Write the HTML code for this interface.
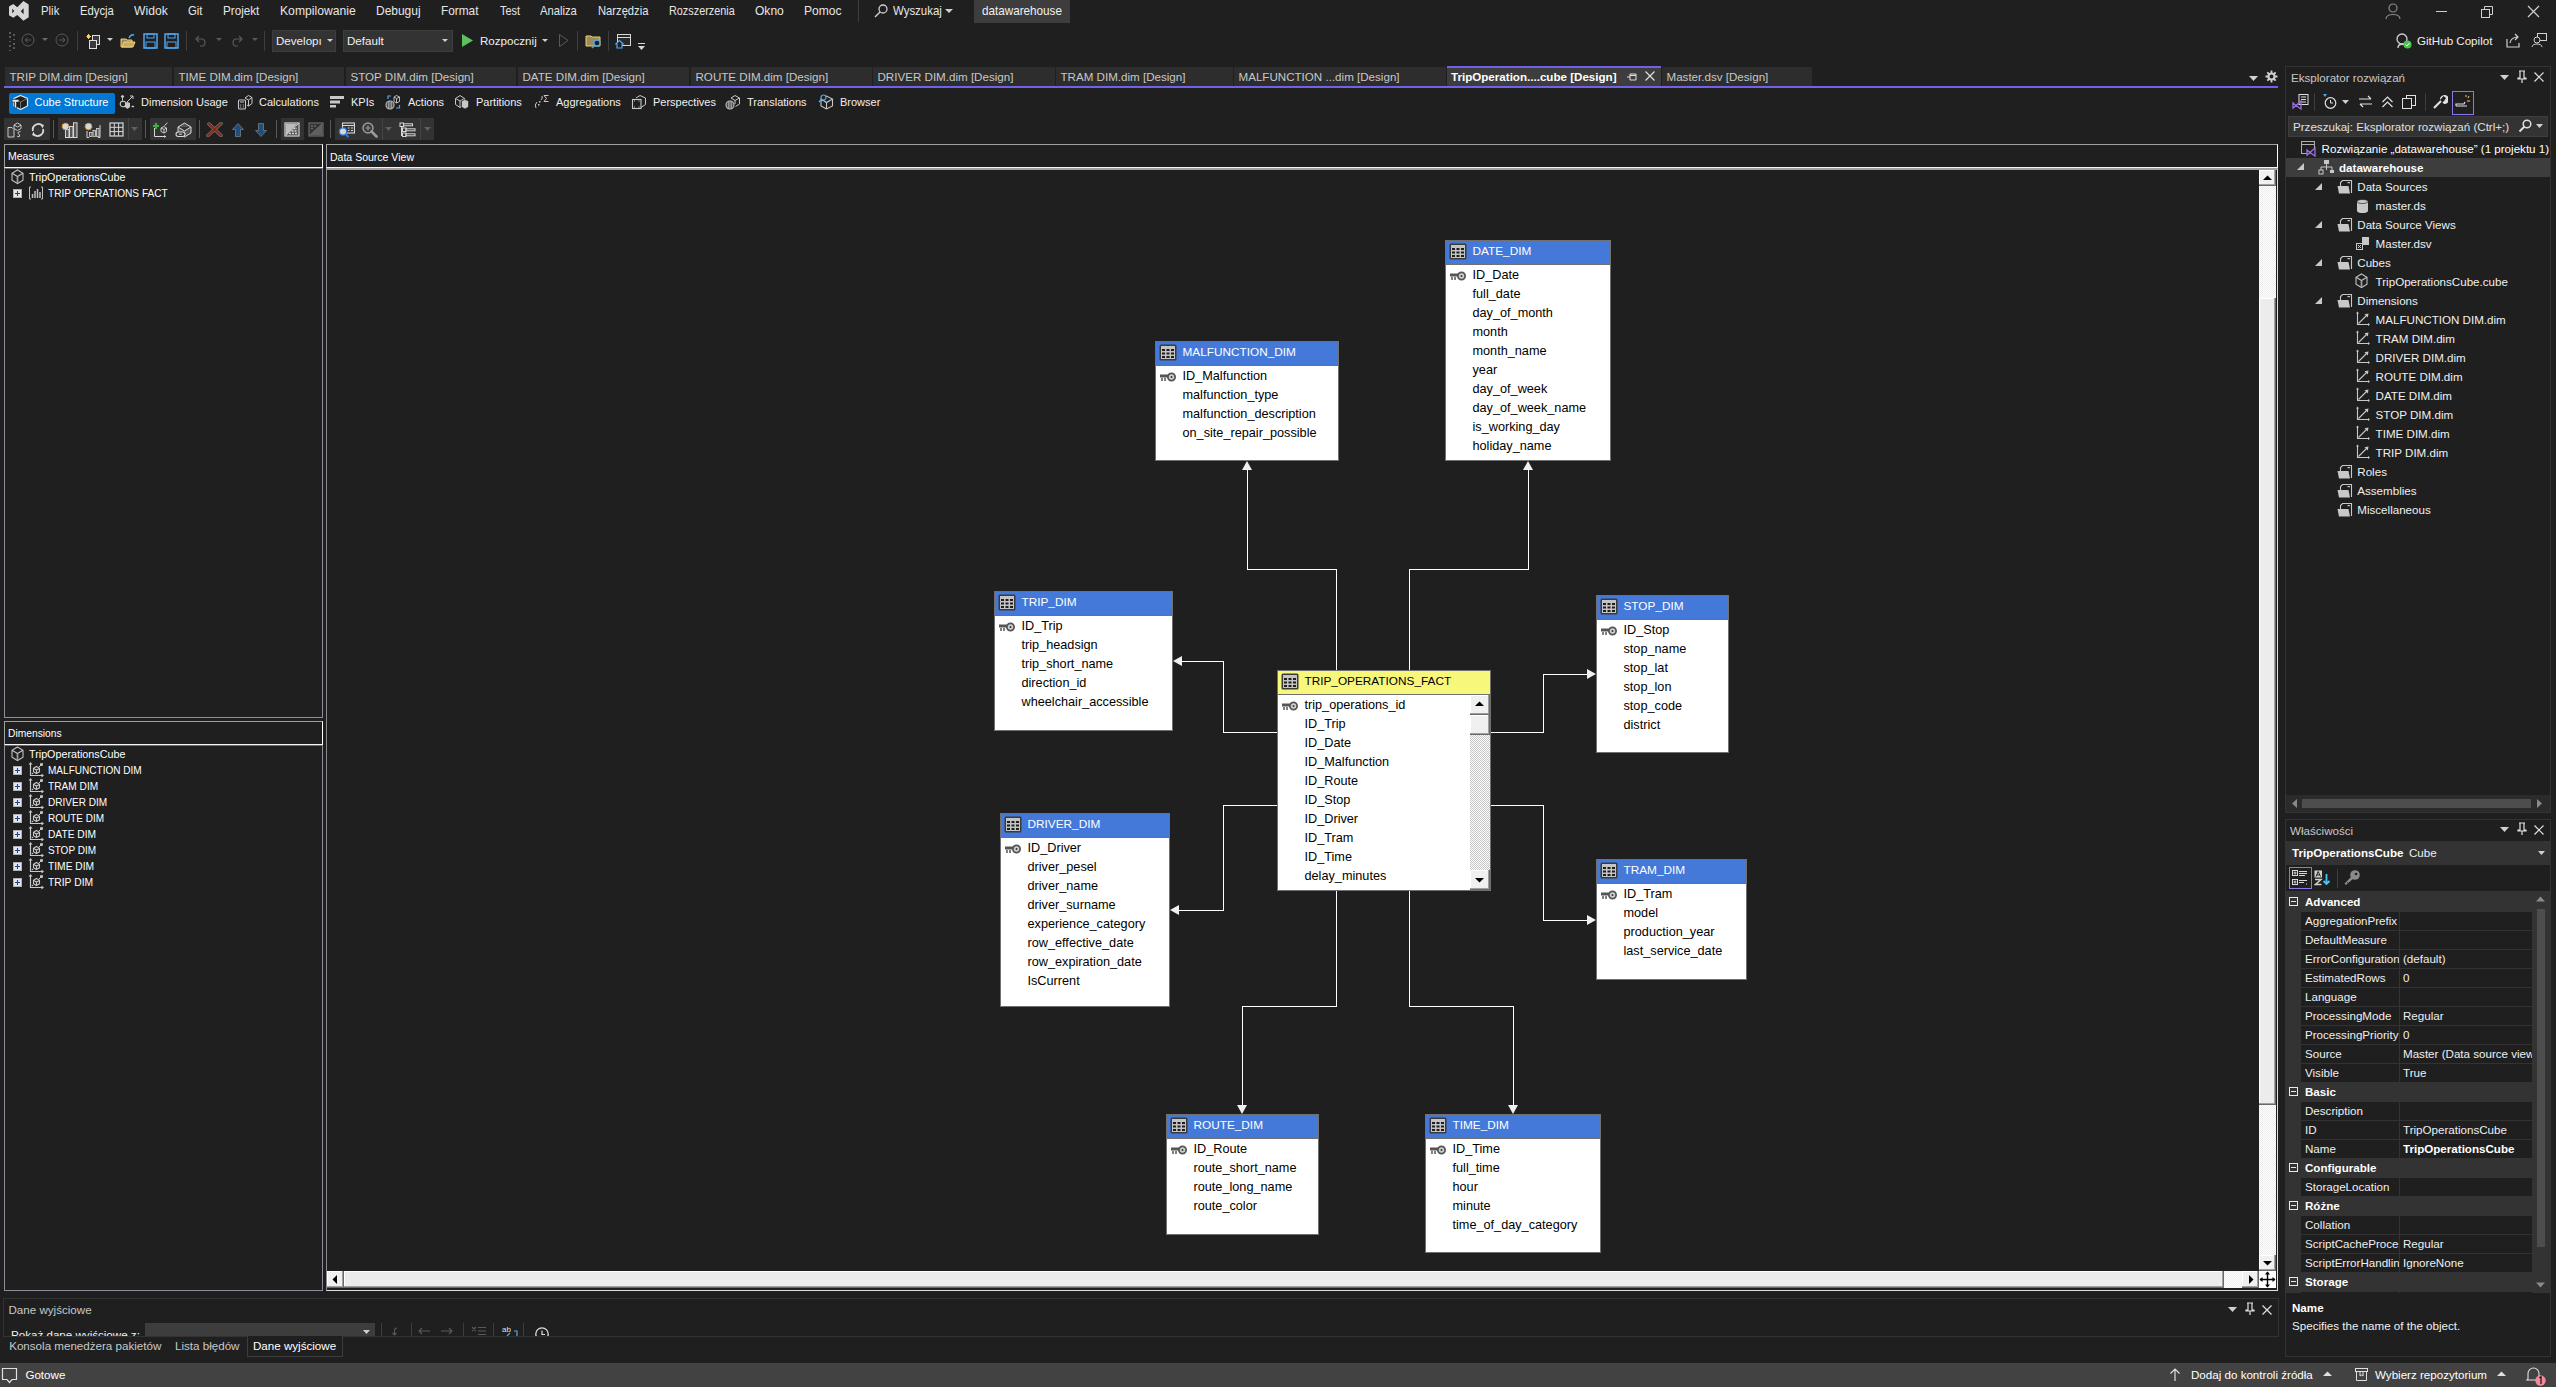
<!DOCTYPE html>
<html><head><meta charset="utf-8"><style>
html,body{margin:0;padding:0;}
body{width:2556px;height:1387px;overflow:hidden;background:#1f1f1f;position:relative;font-family:"Liberation Sans",sans-serif;}
.t{position:absolute;white-space:nowrap;}
.r{position:absolute;}
.clip{overflow:hidden;}
</style></head><body>
<svg class="r" style="left:0px;top:0px;" width="34" height="24" viewBox="0 0 34 24"><path d="M9 6.5 L13.3 4 L17.3 7.3 L23.4 1 L28.7 4.6 V17.2 L23.4 20.8 L17.3 14.9 L13.3 17.8 L9 15.2 Z M12.3 8.8 V13.2 L14.3 11 Z M23.6 8.2 V14.2 L20.8 11.2 Z" fill="#d6d6d6" fill-rule="evenodd"/></svg>
<div class="t" style="left:41.3px;top:1.77px;font-size:12.2px;line-height:18px;color:#e6e6e6;transform:scaleX(0.9325);transform-origin:0 0;">Plik</div>
<div class="t" style="left:80.1px;top:1.77px;font-size:12.2px;line-height:18px;color:#e6e6e6;transform:scaleX(0.9240);transform-origin:0 0;">Edycja</div>
<div class="t" style="left:134px;top:1.77px;font-size:12.2px;line-height:18px;color:#e6e6e6;transform:scaleX(0.9953);transform-origin:0 0;">Widok</div>
<div class="t" style="left:188.3px;top:1.77px;font-size:12.2px;line-height:18px;color:#e6e6e6;transform:scaleX(0.9308);transform-origin:0 0;">Git</div>
<div class="t" style="left:223.3px;top:1.77px;font-size:12.2px;line-height:18px;color:#e6e6e6;transform:scaleX(0.9568);transform-origin:0 0;">Projekt</div>
<div class="t" style="left:280.2px;top:1.77px;font-size:12.2px;line-height:18px;color:#e6e6e6;transform:scaleX(0.9990);transform-origin:0 0;">Kompilowanie</div>
<div class="t" style="left:376px;top:1.77px;font-size:12.2px;line-height:18px;color:#e6e6e6;transform:scaleX(0.9822);transform-origin:0 0;">Debuguj</div>
<div class="t" style="left:441.2px;top:1.77px;font-size:12.2px;line-height:18px;color:#e6e6e6;transform:scaleX(0.9713);transform-origin:0 0;">Format</div>
<div class="t" style="left:499.5px;top:1.77px;font-size:12.2px;line-height:18px;color:#e6e6e6;transform:scaleX(0.8945);transform-origin:0 0;">Test</div>
<div class="t" style="left:540.3px;top:1.77px;font-size:12.2px;line-height:18px;color:#e6e6e6;transform:scaleX(0.9207);transform-origin:0 0;">Analiza</div>
<div class="t" style="left:598.4px;top:1.77px;font-size:12.2px;line-height:18px;color:#e6e6e6;transform:scaleX(0.9185);transform-origin:0 0;">Narzędzia</div>
<div class="t" style="left:669px;top:1.77px;font-size:12.2px;line-height:18px;color:#e6e6e6;transform:scaleX(0.8897);transform-origin:0 0;">Rozszerzenia</div>
<div class="t" style="left:755.2px;top:1.77px;font-size:12.2px;line-height:18px;color:#e6e6e6;transform:scaleX(0.9883);transform-origin:0 0;">Okno</div>
<div class="t" style="left:804px;top:1.77px;font-size:12.2px;line-height:18px;color:#e6e6e6;transform:scaleX(0.9885);transform-origin:0 0;">Pomoc</div>
<div class="r" style="left:858px;top:0px;width:1px;height:22px;background:#3d3d3d;"></div>
<svg class="r" style="left:873px;top:3px;" width="16" height="16" viewBox="0 0 16 16"><circle cx="10" cy="6" r="4" fill="none" stroke="#cfcfcf" stroke-width="1.3"/><path d="M7 9 L2 14" stroke="#cfcfcf" stroke-width="1.5"/></svg>
<div class="t" style="left:892.9px;top:1.77px;font-size:12.2px;line-height:18px;color:#e6e6e6;transform:scaleX(0.9379);transform-origin:0 0;">Wyszukaj</div>
<svg class="r" style="left:945px;top:8px;" width="8" height="6" viewBox="0 0 8 6"><path d="M0 1 L8 1 L4 5 Z" fill="#cfcfcf"/></svg>
<div class="r" style="left:974px;top:0px;width:96px;height:23px;background:#3d3d3d;"></div>
<div class="t" style="left:981.8px;top:1.77px;font-size:12.2px;line-height:18px;color:#f0f0f0;transform:scaleX(0.9595);transform-origin:0 0;">datawarehouse</div>
<svg class="r" style="left:2384px;top:2px;" width="18" height="18" viewBox="0 0 18 18"><circle cx="9" cy="6" r="4" fill="none" stroke="#8a8a8a" stroke-width="1.2"/><path d="M2 17 C2 11 16 11 16 17" fill="none" stroke="#8a8a8a" stroke-width="1.2"/></svg>
<div class="r" style="left:2436px;top:11px;width:11px;height:1px;background:#d0d0d0;"></div>
<svg class="r" style="left:2481px;top:6px;" width="12" height="12" viewBox="0 0 12 12"><rect x="0.5" y="3.5" width="8" height="8" fill="none" stroke="#d0d0d0"/><path d="M3.5 3.5 V0.5 H11.5 V8.5 H8.5" fill="none" stroke="#d0d0d0"/></svg>
<svg class="r" style="left:2527px;top:5px;" width="13" height="13" viewBox="0 0 13 13"><path d="M1 1 L12 12 M12 1 L1 12" stroke="#d0d0d0" stroke-width="1.2"/></svg>
<div class="r" style="left:9px;top:32.0px;width:1.5px;height:1.5px;background:#5a5a5a;"></div>
<div class="r" style="left:13px;top:34.2px;width:1.5px;height:1.5px;background:#5a5a5a;"></div>
<div class="r" style="left:9px;top:36.4px;width:1.5px;height:1.5px;background:#5a5a5a;"></div>
<div class="r" style="left:13px;top:38.6px;width:1.5px;height:1.5px;background:#5a5a5a;"></div>
<div class="r" style="left:9px;top:40.8px;width:1.5px;height:1.5px;background:#5a5a5a;"></div>
<div class="r" style="left:13px;top:43.0px;width:1.5px;height:1.5px;background:#5a5a5a;"></div>
<div class="r" style="left:9px;top:45.2px;width:1.5px;height:1.5px;background:#5a5a5a;"></div>
<div class="r" style="left:13px;top:47.400000000000006px;width:1.5px;height:1.5px;background:#5a5a5a;"></div>
<div class="r" style="left:9px;top:49.6px;width:1.5px;height:1.5px;background:#5a5a5a;"></div>
<svg class="r" style="left:21px;top:33px;" width="14" height="14" viewBox="0 0 14 14"><circle cx="7" cy="7" r="6" fill="none" stroke="#5a5a5a"/><path d="M10 7 H4 M6.5 4.5 L4 7 L6.5 9.5" fill="none" stroke="#5a5a5a"/></svg>
<svg class="r" style="left:42px;top:38px;" width="8" height="5" viewBox="0 0 8 5"><path d="M0 0 L6 0 L3 3 Z" fill="#6a6a6a"/></svg>
<svg class="r" style="left:55px;top:33px;" width="14" height="14" viewBox="0 0 14 14"><circle cx="7" cy="7" r="6" fill="none" stroke="#5a5a5a"/><path d="M4 7 H10 M7.5 4.5 L10 7 L7.5 9.5" fill="none" stroke="#5a5a5a"/></svg>
<div class="r" style="left:77px;top:31px;width:1px;height:20px;background:#3d3d3d;"></div>
<svg class="r" style="left:85px;top:32px;" width="18" height="18" viewBox="0 0 18 18"><path d="M2 3 L5 6 M5 3 L2 6 M3.5 2 V7 M1.5 4.5 H6" stroke="#f0d070" stroke-width="1"/><rect x="7.5" y="3.5" width="7" height="9" fill="#3a3a3a" stroke="#e0e0e0"/><rect x="4.5" y="8.5" width="7" height="8" fill="#3a3a3a" stroke="#e0e0e0"/></svg>
<svg class="r" style="left:107px;top:38px;" width="8" height="5" viewBox="0 0 8 5"><path d="M0 0 L6 0 L3 3 Z" fill="#d0d0d0"/></svg>
<svg class="r" style="left:120px;top:33px;" width="16" height="16" viewBox="0 0 16 16"><path d="M1 6 H6 L7 7 H12 V14 H1 Z" fill="#a08a5a" stroke="#f0d070"/><path d="M2 14 L4 9 H15 L13 14 Z" fill="#c8aa6a" stroke="#f0d070"/><path d="M9 5 Q11 1 14 2" fill="none" stroke="#4fa8f0" stroke-width="1.5"/></svg>
<svg class="r" style="left:143px;top:33px;" width="15" height="16" viewBox="0 0 15 16"><rect x="1" y="1" width="13" height="14" fill="none" stroke="#4fa8f0" stroke-width="1.5"/><rect x="4" y="1" width="7" height="4" fill="none" stroke="#4fa8f0"/><rect x="3" y="9" width="9" height="6" fill="none" stroke="#4fa8f0"/></svg>
<svg class="r" style="left:164px;top:33px;" width="15" height="16" viewBox="0 0 15 16"><rect x="1" y="1" width="13" height="14" fill="none" stroke="#4fa8f0" stroke-width="1.5"/><rect x="4" y="1" width="7" height="4" fill="none" stroke="#4fa8f0"/><rect x="3" y="9" width="9" height="6" fill="none" stroke="#4fa8f0"/></svg>
<div class="r" style="left:186px;top:31px;width:1px;height:20px;background:#3d3d3d;"></div>
<svg class="r" style="left:194px;top:33px;" width="14" height="14" viewBox="0 0 14 14"><path d="M3 6 H9 A4 4 0 0 1 9 13 H6 M5 3 L2 6 L5 9" fill="none" stroke="#5a5a5a" stroke-width="1.2"/></svg>
<svg class="r" style="left:216px;top:38px;" width="8" height="5" viewBox="0 0 8 5"><path d="M0 0 L6 0 L3 3 Z" fill="#5a5a5a"/></svg>
<svg class="r" style="left:230px;top:33px;" width="14" height="14" viewBox="0 0 14 14"><path d="M11 6 H5 A4 4 0 0 0 5 13 H8 M9 3 L12 6 L9 9" fill="none" stroke="#5a5a5a" stroke-width="1.2"/></svg>
<svg class="r" style="left:252px;top:38px;" width="8" height="5" viewBox="0 0 8 5"><path d="M0 0 L6 0 L3 3 Z" fill="#5a5a5a"/></svg>
<div class="r" style="left:264px;top:31px;width:1px;height:20px;background:#3d3d3d;"></div>
<div class="r" style="left:272px;top:30px;width:64px;height:22px;background:#333333;border:1px solid #3d3d3d;box-sizing:border-box;"></div>
<div class="t" style="left:276px;top:32.48px;font-size:11.6px;line-height:17px;color:#f0f0f0;">Developı</div>
<svg class="r" style="left:327px;top:39px;" width="8" height="5" viewBox="0 0 8 5"><path d="M0 0 L6 0 L3 3 Z" fill="#d0d0d0"/></svg>
<div class="r" style="left:343px;top:30px;width:110px;height:22px;background:#333333;border:1px solid #3d3d3d;box-sizing:border-box;"></div>
<div class="t" style="left:347px;top:32.48px;font-size:11.6px;line-height:17px;color:#f0f0f0;">Default</div>
<svg class="r" style="left:442px;top:39px;" width="8" height="5" viewBox="0 0 8 5"><path d="M0 0 L6 0 L3 3 Z" fill="#d0d0d0"/></svg>
<svg class="r" style="left:461px;top:33px;" width="13" height="15" viewBox="0 0 13 15"><path d="M1 1 L12 7.5 L1 14 Z" fill="#5dc25d"/></svg>
<div class="t" style="left:480px;top:32.48px;font-size:11.6px;line-height:17px;color:#f0f0f0;">Rozpocznij</div>
<svg class="r" style="left:542px;top:39px;" width="8" height="5" viewBox="0 0 8 5"><path d="M0 0 L6 0 L3 3 Z" fill="#d0d0d0"/></svg>
<svg class="r" style="left:558px;top:33px;" width="12" height="15" viewBox="0 0 12 15"><path d="M1.5 1.5 L10 7.5 L1.5 13.5 Z" fill="none" stroke="#5a5a5a"/></svg>
<div class="r" style="left:577px;top:31px;width:1px;height:20px;background:#3d3d3d;"></div>
<svg class="r" style="left:585px;top:33px;" width="17" height="16" viewBox="0 0 17 16"><path d="M1 3 H6 L7 4 H15 V13 H1 Z" fill="#a08a5a" stroke="#f0d070"/><circle cx="12" cy="10" r="3" fill="#1f1f1f" stroke="#4fa8f0" stroke-width="1.3"/><path d="M10 12 L7 15" stroke="#4fa8f0" stroke-width="1.5"/></svg>
<div class="r" style="left:608px;top:31px;width:1px;height:20px;background:#3d3d3d;"></div>
<svg class="r" style="left:615px;top:33px;" width="16" height="16" viewBox="0 0 16 16"><rect x="2.5" y="1.5" width="13" height="11" fill="#2a2a2a" stroke="#d8d8d8"/><path d="M2.5 4.5 H15.5" stroke="#d8d8d8"/><path d="M0.8 11 L4.5 7.5 L8.2 11 H7 V15 H2 V11 Z" fill="#1f1f1f" stroke="#4fa8f0" stroke-width="1.2"/></svg>
<svg class="r" style="left:637px;top:43px;" width="9" height="8" viewBox="0 0 9 8"><path d="M1 0.5 H8" stroke="#d8d8d8"/><path d="M1 3 H8 L4.5 7 Z" fill="#d8d8d8"/></svg>
<svg class="r" style="left:2395px;top:32px;" width="18" height="18" viewBox="0 0 18 18"><circle cx="7" cy="7" r="5" fill="none" stroke="#d0d0d0" stroke-width="1.3"/><path d="M3 16 C3 11 11 11 11 16" fill="none" stroke="#d0d0d0" stroke-width="1.3"/><circle cx="12.5" cy="12.5" r="4" fill="#4cc24c"/><path d="M10.5 12.5 L12 14 L14.5 11" fill="none" stroke="#fff" stroke-width="1"/></svg>
<div class="t" style="left:2417px;top:32.48px;font-size:11.6px;line-height:17px;color:#f0f0f0;">GitHub Copilot</div>
<svg class="r" style="left:2506px;top:33px;" width="15" height="15" viewBox="0 0 15 15"><path d="M1 6 V14 H13 V10" fill="none" stroke="#d0d0d0" stroke-width="1.2"/><path d="M4 10 Q5 4 12 4 M9 1 L12 4 L9 7" fill="none" stroke="#d0d0d0" stroke-width="1.2"/></svg>
<svg class="r" style="left:2531px;top:32px;" width="16" height="16" viewBox="0 0 16 16"><rect x="6.5" y="1.5" width="9" height="7" fill="none" stroke="#d0d0d0"/><circle cx="6" cy="8" r="3" fill="#1f1f1f" stroke="#d0d0d0"/><path d="M1 15 C1 11 11 11 11 15" fill="none" stroke="#d0d0d0"/></svg>
<div class="r" style="left:5px;top:67px;width:167px;height:19px;background:#2d2d2d;"></div>
<div class="t" style="left:9.5px;top:67.98px;font-size:11.6px;line-height:17px;color:#c8c8c8;">TRIP DIM.dim [Design]</div>
<div class="r" style="left:174px;top:67px;width:170px;height:19px;background:#2d2d2d;"></div>
<div class="t" style="left:178.5px;top:67.98px;font-size:11.6px;line-height:17px;color:#c8c8c8;">TIME DIM.dim [Design]</div>
<div class="r" style="left:346px;top:67px;width:170px;height:19px;background:#2d2d2d;"></div>
<div class="t" style="left:350.5px;top:67.98px;font-size:11.6px;line-height:17px;color:#c8c8c8;">STOP DIM.dim [Design]</div>
<div class="r" style="left:518px;top:67px;width:171px;height:19px;background:#2d2d2d;"></div>
<div class="t" style="left:522.5px;top:67.98px;font-size:11.6px;line-height:17px;color:#c8c8c8;">DATE DIM.dim [Design]</div>
<div class="r" style="left:691px;top:67px;width:181px;height:19px;background:#2d2d2d;"></div>
<div class="t" style="left:695.5px;top:67.98px;font-size:11.6px;line-height:17px;color:#c8c8c8;">ROUTE DIM.dim [Design]</div>
<div class="r" style="left:873px;top:67px;width:182px;height:19px;background:#2d2d2d;"></div>
<div class="t" style="left:877.5px;top:67.98px;font-size:11.6px;line-height:17px;color:#c8c8c8;">DRIVER DIM.dim [Design]</div>
<div class="r" style="left:1056px;top:67px;width:177px;height:19px;background:#2d2d2d;"></div>
<div class="t" style="left:1060.5px;top:67.98px;font-size:11.6px;line-height:17px;color:#c8c8c8;">TRAM DIM.dim [Design]</div>
<div class="r" style="left:1234px;top:67px;width:212px;height:19px;background:#2d2d2d;"></div>
<div class="t" style="left:1238.5px;top:67.98px;font-size:11.6px;line-height:17px;color:#c8c8c8;">MALFUNCTION ...dim [Design]</div>
<div class="r" style="left:1662px;top:67px;width:150px;height:19px;background:#2d2d2d;"></div>
<div class="t" style="left:1666.5px;top:67.98px;font-size:11.6px;line-height:17px;color:#c8c8c8;">Master.dsv [Design]</div>
<div class="r" style="left:1447px;top:66px;width:214px;height:2px;background:#7160e8;"></div>
<div class="r" style="left:1447px;top:68px;width:214px;height:18px;background:#3d3d3d;"></div>
<div class="t" style="left:1451px;top:67.98px;font-size:11.6px;line-height:17px;color:#ffffff;font-weight:bold;">TripOperation....cube [Design]</div>
<svg class="r" style="left:1626px;top:72px;" width="12" height="10" viewBox="0 0 12 10"><path d="M1 5 H4 M4 2 V8 M4 2 H10 V8 H4 M4 3.5 H10" fill="none" stroke="#e0e0e0" stroke-width="1"/></svg>
<svg class="r" style="left:1644px;top:70px;" width="12" height="12" viewBox="0 0 12 12"><path d="M1.5 1.5 L10.5 10.5 M10.5 1.5 L1.5 10.5" stroke="#e0e0e0" stroke-width="1.2"/></svg>
<div class="r" style="left:4px;top:86px;width:2274px;height:2px;background:#7160e8;"></div>
<svg class="r" style="left:2249px;top:75px;" width="10" height="7" viewBox="0 0 10 7"><path d="M0 1 L9 1 L4.5 6 Z" fill="#d0d0d0"/></svg>
<svg class="r" style="left:2265px;top:70px;" width="13" height="13" viewBox="0 0 13 13"><circle cx="6.5" cy="6.5" r="3" fill="none" stroke="#d0d0d0" stroke-width="2"/><path d="M6.5 0.5 V3 M6.5 10 V12.5 M0.5 6.5 H3 M10 6.5 H12.5 M2.3 2.3 L4 4 M9 9 L10.7 10.7 M2.3 10.7 L4 9 M9 4 L10.7 2.3" stroke="#d0d0d0" stroke-width="1.8"/></svg>
<div class="r" style="left:4px;top:88px;width:2274px;height:1202px;background:#1f1f1f;"></div>
<div class="r" style="left:9px;top:93px;width:106px;height:21px;background:#0078d4;border-radius:2px;"></div>
<svg class="r" style="left:11px;top:94px;" width="18" height="17" viewBox="0 0 18 17"><path d="M9.5 1.5 L16.5 4.5 L16.5 12 L9.5 15.5 L3 12 L3 4.5 Z" fill="#1f1f1f" stroke="#e8e8e8" stroke-width="1.2"/><path d="M3 4.5 L9.5 8 L16.5 4.5 M9.5 8 V15.5" fill="none" stroke="#8a8a8a" stroke-width="0.8"/><path d="M1 5.5 H8 V8 H5.5 V14 H3.5 V8 H1 Z" fill="#e8e8e8" stroke="#1f1f1f" stroke-width="0.6"/></svg>
<div class="t" style="left:34.5px;top:93.69px;font-size:11px;line-height:16px;color:#ffffff;">Cube Structure</div>
<svg class="r" style="left:119px;top:94px;" width="16" height="16" viewBox="0 0 16 16"><path d="M3.5 1 L5 3 H2 Z M3.5 3 V8" stroke="#c8c8c8" fill="#c8c8c8" stroke-width="0.9"/><path d="M8 8 L14 2 M14 2 H11 M14 2 V5" stroke="#c8c8c8" fill="none" stroke-width="1"/><circle cx="4" cy="10" r="2.8" fill="none" stroke="#c8c8c8" stroke-width="1.1"/><path d="M6 9 L8.5 8 L11 9 V13 L8.5 15 L6 13 Z" fill="#c8c8c8"/><path d="M12 12.5 L14 11.5 L15.5 12.5 L14 13.5 Z" fill="#c8c8c8"/></svg>
<div class="t" style="left:141px;top:93.69px;font-size:11px;line-height:16px;color:#f0f0f0;">Dimension Usage</div>
<svg class="r" style="left:237px;top:94px;" width="16" height="16" viewBox="0 0 16 16"><rect x="1.5" y="6" width="7" height="9" rx="1" fill="#1f1f1f" stroke="#c8c8c8" stroke-width="1.1"/><path d="M3 8 H7 M3.2 11 H4.2 M5.8 11 H6.8 M3.2 13 H4.2 M5.8 13 H6.8" stroke="#c8c8c8" stroke-width="1"/><path d="M8 4 L11.5 1.5 L15 3.5 V9.5 L11.5 12 L10 11 M8 4 L11.5 6 L15 3.5 M11.5 6 V12" fill="none" stroke="#c8c8c8" stroke-width="1"/></svg>
<div class="t" style="left:259px;top:93.69px;font-size:11px;line-height:16px;color:#f0f0f0;">Calculations</div>
<svg class="r" style="left:329px;top:95px;" width="16" height="13" viewBox="0 0 16 13"><rect x="1" y="1" width="14" height="3" fill="#c8c8c8"/><rect x="1" y="5.5" width="10" height="3" fill="#c8c8c8"/><rect x="1" y="10" width="6" height="2.5" fill="#c8c8c8"/></svg>
<div class="t" style="left:351px;top:93.69px;font-size:11px;line-height:16px;color:#f0f0f0;">KPIs</div>
<svg class="r" style="left:385px;top:94px;" width="16" height="16" viewBox="0 0 16 16"><circle cx="5" cy="11" r="4" fill="none" stroke="#c8c8c8" stroke-width="1.1"/><path d="M1.5 11 H8.5 M5 7 V15 M2 9 H8 M2 13 H8 M3.5 7.5 V14.5 M6.5 7.5 V14.5" stroke="#c8c8c8" stroke-width="0.6"/><path d="M9 3 L11.5 1.5 L14.5 3 V7.5 L11.5 9 L9 7.5 Z M9 3 L11.5 4.5 L14.5 3 M11.5 4.5 V9" fill="none" stroke="#c8c8c8" stroke-width="0.9"/><path d="M3 5 V2 H6 M14.5 11 V14 H11" fill="none" stroke="#4fa8f0" stroke-width="1.2"/></svg>
<div class="t" style="left:408px;top:93.69px;font-size:11px;line-height:16px;color:#f0f0f0;">Actions</div>
<svg class="r" style="left:454px;top:94px;" width="16" height="16" viewBox="0 0 16 16"><path d="M1.5 4.5 L6 1.5 L10.5 4.5 V10.5 L6 13.5 L1.5 10.5 Z M1.5 4.5 L6 7 L10.5 4.5 M6 7 V13.5" fill="none" stroke="#c8c8c8" stroke-width="1"/><path d="M7.5 7 L11 5.5 L14.5 7 V13 L11 15 L7.5 13 Z" fill="#c8c8c8" stroke="#1f1f1f" stroke-width="0.6"/></svg>
<div class="t" style="left:476px;top:93.69px;font-size:11px;line-height:16px;color:#f0f0f0;">Partitions</div>
<svg class="r" style="left:533px;top:94px;" width="17" height="16" viewBox="0 0 17 16"><path d="M3 14 Q1 11 4 8" fill="none" stroke="#c8c8c8" stroke-width="1"/><rect x="5" y="10" width="1.5" height="1.5" fill="#c8c8c8"/><rect x="6" y="7" width="1.5" height="1.5" fill="#c8c8c8"/><path d="M8 6 Q10 4 9 2" fill="none" stroke="#c8c8c8" stroke-width="1"/><path d="M15.5 1.5 H11 L13.5 4.5 L11 7.5 H15.5" fill="none" stroke="#c8c8c8" stroke-width="1"/></svg>
<div class="t" style="left:556px;top:93.69px;font-size:11px;line-height:16px;color:#f0f0f0;">Aggregations</div>
<svg class="r" style="left:631px;top:94px;" width="16" height="16" viewBox="0 0 16 16"><path d="M5 4 L9 1.5 L14.5 4 V10.5 L10 13.5" fill="none" stroke="#c8c8c8" stroke-width="1"/><rect x="1.5" y="5.5" width="8.5" height="9" fill="none" stroke="#c8c8c8" stroke-width="1.1"/><path d="M3 7 H4 M7.5 7 H8.5 M3 13 H4 M7.5 13 H8.5" stroke="#c8c8c8" stroke-width="1"/></svg>
<div class="t" style="left:653px;top:93.69px;font-size:11px;line-height:16px;color:#f0f0f0;">Perspectives</div>
<svg class="r" style="left:725px;top:94px;" width="16" height="16" viewBox="0 0 16 16"><path d="M6 4 L10 1.5 L14.5 4 V10 L10.5 12.5 M6 4 L10 6.5 L14.5 4 M10 6.5 V10" fill="none" stroke="#c8c8c8" stroke-width="1"/><circle cx="5" cy="11" r="4" fill="#1f1f1f" stroke="#c8c8c8" stroke-width="1.1"/><path d="M1.5 11 H8.5 M5 7 V15 M2 9 H8 M2 13 H8 M3.5 7.5 V14.5 M6.5 7.5 V14.5" stroke="#c8c8c8" stroke-width="0.6"/></svg>
<div class="t" style="left:747px;top:93.69px;font-size:11px;line-height:16px;color:#f0f0f0;">Translations</div>
<svg class="r" style="left:818px;top:94px;" width="16" height="16" viewBox="0 0 16 16"><path d="M3 5 L8.5 2 L14.5 5 V12 L8.5 15 L3 12 Z M3 5 L8.5 8.5 L14.5 5 M8.5 8.5 V15" fill="none" stroke="#c8c8c8" stroke-width="1.1"/><circle cx="5.5" cy="3.5" r="2.5" fill="#1f1f1f" stroke="#4fa8f0" stroke-width="1.2"/><path d="M3.8 5.2 L1 8" stroke="#4fa8f0" stroke-width="1.4"/></svg>
<div class="t" style="left:840px;top:93.69px;font-size:11px;line-height:16px;color:#f0f0f0;">Browser</div>
<div class="r" style="left:4px;top:118px;width:46px;height:22px;background:#333333;"></div>
<div class="r" style="left:58px;top:118px;width:84px;height:22px;background:#333333;"></div>
<div class="r" style="left:150px;top:118px;width:46px;height:22px;background:#333333;"></div>
<div class="r" style="left:281px;top:118px;width:23px;height:22px;background:#333333;"></div>
<div class="r" style="left:335px;top:118px;width:99px;height:22px;background:#333333;"></div>
<div class="r" style="left:53px;top:120px;width:1px;height:18px;background:#5a5a5a;"></div>
<div class="r" style="left:145px;top:120px;width:1px;height:18px;background:#5a5a5a;"></div>
<div class="r" style="left:199px;top:120px;width:1px;height:18px;background:#5a5a5a;"></div>
<div class="r" style="left:276px;top:120px;width:1px;height:18px;background:#5a5a5a;"></div>
<div class="r" style="left:330px;top:120px;width:1px;height:18px;background:#5a5a5a;"></div>
<div class="r" style="left:128px;top:118px;width:1px;height:22px;background:#444444;"></div>
<div class="r" style="left:382px;top:118px;width:1px;height:22px;background:#444444;"></div>
<div class="r" style="left:420px;top:118px;width:1px;height:22px;background:#444444;"></div>
<svg class="r" style="left:7px;top:122px;" width="16" height="16" viewBox="0 0 16 16"><path d="M1 5.5 H5 L7 7.5 V15 H1 Z" fill="#3a3a3a" stroke="#d8d8d8" stroke-width="0.9"/><path d="M7 3 L10.5 1 L14 3 V6.5 L10.5 8.5 L7 6.5 Z M7 3 L10.5 5 L14 3" fill="none" stroke="#d8d8d8" stroke-width="0.9"/><path d="M13.5 9.5 Q10.5 9.5 11 11.5 Q13.5 12.5 12.5 14.5 Q10.5 15 10 14" fill="none" stroke="#d8d8d8" stroke-width="0.9"/></svg>
<svg class="r" style="left:30px;top:122px;" width="16" height="16" viewBox="0 0 16 16"><path d="M3 9 A5.5 5.5 0 0 1 12.5 4 M13 7 A5.5 5.5 0 0 1 4 12.5" fill="none" stroke="#d8d8d8" stroke-width="1.8"/><path d="M10.5 2 L14 3 L12.5 6.5 Z M5.5 14.5 L2 13 L3.5 9.5 Z" fill="#d8d8d8"/><circle cx="8" cy="8" r="2" fill="#3a3a3a"/></svg>
<svg class="r" style="left:61px;top:122px;" width="17" height="16" viewBox="0 0 17 16"><rect x="4.5" y="7.5" width="3.5" height="8" fill="#555" stroke="#d8d8d8"/><rect x="8.5" y="4.5" width="3.5" height="11" fill="#555" stroke="#d8d8d8"/><rect x="12.5" y="0.8" width="3.5" height="14.7" fill="#555" stroke="#d8d8d8"/><circle cx="4.5" cy="4.5" r="3.2" fill="#d8d8d8" stroke="#f0a030" stroke-width="1.3" stroke-dasharray="1.2 1"/></svg>
<svg class="r" style="left:84px;top:122px;" width="17" height="16" viewBox="0 0 17 16"><path d="M3 9 V15.5 H5 M14 15.5 H16 V3" fill="none" stroke="#d8d8d8"/><rect x="5.5" y="10.5" width="2.5" height="4" fill="#555" stroke="#d8d8d8" stroke-width="0.8"/><rect x="9" y="8.5" width="2.5" height="6" fill="#555" stroke="#d8d8d8" stroke-width="0.8"/><rect x="12.5" y="6.5" width="2.5" height="8" fill="#555" stroke="#d8d8d8" stroke-width="0.8"/><circle cx="4.5" cy="4.5" r="3.2" fill="#d8d8d8" stroke="#f0a030" stroke-width="1.3" stroke-dasharray="1.2 1"/></svg>
<svg class="r" style="left:109px;top:122px;" width="15" height="15" viewBox="0 0 15 15"><rect x="1" y="1" width="13" height="13" fill="none" stroke="#d8d8d8" stroke-width="1.2"/><path d="M1 5.3 H14 M1 9.6 H14 M5.3 1 V14 M9.6 1 V14" stroke="#d8d8d8" stroke-width="1"/></svg>
<svg class="r" style="left:131px;top:127px;" width="7" height="5" viewBox="0 0 7 5"><path d="M0 0 L7 0 L3.5 4 Z" fill="#5f5f5f"/></svg>
<svg class="r" style="left:152px;top:122px;" width="17" height="16" viewBox="0 0 17 16"><path d="M2.5 6 V14.5 H14" fill="none" stroke="#d8d8d8"/><path d="M14 14.5 L12 13 V16 Z" fill="#d8d8d8"/><path d="M9 6 L12 4.5 L14.5 6 V9.5 L12 11 L9 9.5 Z M9 6 L12 7.5 L14.5 6 M12 7.5 V11" fill="none" stroke="#d8d8d8" stroke-width="0.9"/><path d="M12.5 3.5 L15.5 0.8" stroke="#d8d8d8"/><path d="M1 4 H7 M4 1 V7" stroke="#3cb043" stroke-width="2.2"/></svg>
<svg class="r" style="left:175px;top:122px;" width="18" height="16" viewBox="0 0 18 16"><path d="M3 5 L9.5 1 L16 5 V11 L9.5 15 L3 11 Z M3 5 L9.5 9 L16 5" fill="#555" stroke="#d8d8d8" stroke-width="1"/><rect x="1" y="10" width="9" height="4.5" rx="2.2" fill="#3a3a3a" stroke="#d8d8d8" stroke-width="1.1"/><path d="M4 12.2 H7" stroke="#d8d8d8" stroke-width="1"/></svg>
<svg class="r" style="left:206px;top:122px;" width="17" height="15" viewBox="0 0 17 15"><path d="M2 13.5 L15 1.5 M3 2 L15 13.5" stroke="#7a7a7a" stroke-width="3.4" stroke-linecap="round"/><path d="M2 13.5 L15 1.5 M3 2 L15 13.5" stroke="#7d2a1f" stroke-width="2.2" stroke-linecap="round"/></svg>
<svg class="r" style="left:232px;top:123px;" width="12" height="14" viewBox="0 0 12 14"><path d="M6 0.5 L11.5 6.5 H8.5 V13.5 H3.5 V6.5 H0.5 Z" fill="#1f4f80" stroke="#7a7a7a" stroke-width="0.8"/></svg>
<svg class="r" style="left:255px;top:123px;" width="12" height="14" viewBox="0 0 12 14"><path d="M6 13.5 L11.5 7.5 H8.5 V0.5 H3.5 V7.5 H0.5 Z" fill="#1f4f80" stroke="#7a7a7a" stroke-width="0.8"/></svg>
<svg class="r" style="left:284px;top:122px;" width="16" height="15" viewBox="0 0 16 15"><rect x="1" y="1" width="14" height="13" fill="#3a3a3a" stroke="#d8d8d8" stroke-width="1.2"/><path d="M2 13 L14 2 V13 Z" fill="#555"/><path d="M2 2 H13 L2 13 Z" fill="#bdbdbd"/><path d="M2 13 L14 2" stroke="#d8d8d8" stroke-width="1"/><path d="M9.5 6.5 H13 M7.5 9 H13 M5 11.5 H13" stroke="#d8d8d8" stroke-width="1.4" stroke-dasharray="2 1"/></svg>
<svg class="r" style="left:308px;top:122px;" width="16" height="15" viewBox="0 0 16 15"><rect x="1" y="1" width="14" height="13" fill="#333" stroke="#6a6a6a" stroke-width="1.2"/><path d="M2 13 L14 2 V13 Z" fill="#5f5f5f"/><path d="M2 13 L14 2" stroke="#6a6a6a"/><path d="M3 4 H8 M3 6.5 H6" stroke="#6a6a6a" stroke-width="1.4" stroke-dasharray="2 1"/></svg>
<svg class="r" style="left:338px;top:122px;" width="17" height="16" viewBox="0 0 17 16"><rect x="4.5" y="1" width="12" height="10" fill="#3a3a3a" stroke="#d8d8d8" stroke-width="1.1"/><path d="M4.5 3.5 H16.5" stroke="#d8d8d8"/><path d="M10 6 H11.5 M13 6 H15 M10 8.5 H11.5 M13 8.5 H15" stroke="#d8d8d8" stroke-width="1.1"/><circle cx="5" cy="9.5" r="3.6" fill="#d8d8d8" stroke="#2f7fd8" stroke-width="1.3"/><path d="M7.5 12 L10.5 15" stroke="#2f7fd8" stroke-width="1.8"/></svg>
<svg class="r" style="left:362px;top:122px;" width="16" height="16" viewBox="0 0 16 16"><circle cx="6" cy="6" r="5" fill="#3a3a3a" stroke="#9a9a9a" stroke-width="1.5"/><path d="M6 3.5 V8.5 M3.5 6 H8.5" stroke="#9a9a9a" stroke-width="1.2"/><path d="M9.5 9.5 L14.5 14.5" stroke="#9a9a9a" stroke-width="2.6" stroke-linecap="round"/></svg>
<svg class="r" style="left:385px;top:127px;" width="7" height="5" viewBox="0 0 7 5"><path d="M0 0 L7 0 L3.5 4 Z" fill="#5f5f5f"/></svg>
<svg class="r" style="left:399px;top:122px;" width="17" height="16" viewBox="0 0 17 16"><rect x="1" y="1" width="3.5" height="3.5" fill="none" stroke="#d8d8d8"/><rect x="4.5" y="1.8" width="9" height="2" fill="none" stroke="#d8d8d8"/><path d="M2.5 4.5 V14" stroke="#d8d8d8"/><rect x="3.5" y="6" width="3.5" height="3.5" fill="none" stroke="#d8d8d8"/><rect x="7" y="6.8" width="9" height="2" fill="none" stroke="#d8d8d8"/><rect x="3.5" y="11" width="3.5" height="3.5" fill="none" stroke="#d8d8d8"/><rect x="7" y="11.8" width="9" height="2" fill="none" stroke="#d8d8d8"/></svg>
<svg class="r" style="left:424px;top:127px;" width="7" height="5" viewBox="0 0 7 5"><path d="M0 0 L7 0 L3.5 4 Z" fill="#5f5f5f"/></svg>
<div class="r" style="left:4px;top:144px;width:319px;height:24px;border-top:1px solid #a0a0a0;border-left:1px solid #a0a0a0;border-right:1px solid #ffffff;border-bottom:1px solid #f4f4f4;box-sizing:border-box;"></div>
<div class="t" style="left:7.5px;top:148.66px;font-size:10.5px;line-height:15px;color:#ffffff;transform:scaleX(1.0016);transform-origin:0 0;">Measures</div>
<div class="r" style="left:4px;top:168px;width:319px;height:550px;border-left:1px solid #8a8f99;border-right:1px solid #8a8f99;border-bottom:1px solid #8a8f99;border-top:1px solid #6a6a6a;box-sizing:border-box;"></div>
<div class="r" style="left:4px;top:721px;width:319px;height:24px;border-top:1px solid #a0a0a0;border-left:1px solid #a0a0a0;border-right:1px solid #ffffff;border-bottom:1px solid #f4f4f4;box-sizing:border-box;"></div>
<div class="t" style="left:7.5px;top:725.66px;font-size:10.5px;line-height:15px;color:#ffffff;transform:scaleX(0.9789);transform-origin:0 0;">Dimensions</div>
<div class="r" style="left:4px;top:745px;width:319px;height:546px;border-left:1px solid #8a8f99;border-right:1px solid #8a8f99;border-bottom:1px solid #8a8f99;border-top:1px solid #6a6a6a;box-sizing:border-box;"></div>
<svg class="r" style="left:11px;top:169px;" width="13" height="16" viewBox="0 0 13 16"><path d="M6.5 1 L12 4.2 L12 11.3 L6.5 14.5 L1 11.3 L1 4.2 Z M1.5 4.5 L6.5 7.5 L11.5 4.5" fill="none" stroke="#c0c0c0" stroke-width="1.1"/><path d="M6.5 7.5 V14" stroke="#9a9a9a" stroke-width="1.8"/></svg>
<div class="t" style="left:28.8px;top:169.86px;font-size:10.5px;line-height:15px;color:#ffffff;transform:scaleX(1.0235);transform-origin:0 0;">TripOperationsCube</div>
<svg class="r" style="left:13px;top:189px;" width="9" height="9" viewBox="0 0 9 9"><rect x="0" y="0" width="9" height="9" fill="#e8e8e8"/><rect x="0.5" y="0.5" width="8" height="8" fill="none" stroke="#b0b0b0"/><path d="M2 4.5 H7 M4.5 2 V7" stroke="#2040a0" stroke-width="1.1"/></svg>
<svg class="r" style="left:28px;top:186px;" width="16" height="14" viewBox="0 0 16 14"><path d="M3 1 H1.5 V13 H3 M13 1 H14.5 V13 H13" fill="none" stroke="#c0c0c0"/><path d="M4.5 12 V8 M7 12 V5 M9.5 12 V3 M12 12 V6" stroke="#c0c0c0" stroke-width="1.5"/></svg>
<div class="t" style="left:48.3px;top:185.86px;font-size:10.5px;line-height:15px;color:#ffffff;transform:scaleX(0.9620);transform-origin:0 0;">TRIP OPERATIONS FACT</div>
<svg class="r" style="left:11px;top:746px;" width="13" height="16" viewBox="0 0 13 16"><path d="M6.5 1 L12 4.2 L12 11.3 L6.5 14.5 L1 11.3 L1 4.2 Z M1.5 4.5 L6.5 7.5 L11.5 4.5" fill="none" stroke="#c0c0c0" stroke-width="1.1"/><path d="M6.5 7.5 V14" stroke="#9a9a9a" stroke-width="1.8"/></svg>
<div class="t" style="left:28.8px;top:746.86px;font-size:10.5px;line-height:15px;color:#ffffff;transform:scaleX(1.0235);transform-origin:0 0;">TripOperationsCube</div>
<svg class="r" style="left:13px;top:766px;" width="9" height="9" viewBox="0 0 9 9"><rect x="0" y="0" width="9" height="9" fill="#e8e8e8"/><rect x="0.5" y="0.5" width="8" height="8" fill="none" stroke="#b0b0b0"/><path d="M2 4.5 H7 M4.5 2 V7" stroke="#2040a0" stroke-width="1.1"/></svg>
<svg class="r" style="left:28px;top:762px;" width="17" height="16" viewBox="0 0 17 16"><path d="M2.5 2 V13.5 H14" fill="none" stroke="#c8c8c8" stroke-width="1.2"/><path d="M2.5 0 L4.5 2.5 H0.5 Z M16 13.5 L13.5 11.5 V15.5 Z" fill="#c8c8c8"/><path d="M8.5 4.5 L11.5 6.2 V9.8 L8.5 11.5 L5.5 9.8 V6.2 Z M5.8 6.5 L8.5 8 L11.2 6.5 M8.5 8 V11" fill="none" stroke="#c8c8c8" stroke-width="1.1"/><path d="M11 5 L14 2 M14.5 1.5 L12 2 L14 4 Z" stroke="#c8c8c8" fill="#c8c8c8" stroke-width="1"/><circle cx="4.5" cy="11.5" r="0.8" fill="#c8c8c8"/></svg>
<div class="t" style="left:48.3px;top:763.06px;font-size:10.5px;line-height:15px;color:#ffffff;transform:scaleX(0.9563);transform-origin:0 0;">MALFUNCTION DIM</div>
<svg class="r" style="left:13px;top:782px;" width="9" height="9" viewBox="0 0 9 9"><rect x="0" y="0" width="9" height="9" fill="#e8e8e8"/><rect x="0.5" y="0.5" width="8" height="8" fill="none" stroke="#b0b0b0"/><path d="M2 4.5 H7 M4.5 2 V7" stroke="#2040a0" stroke-width="1.1"/></svg>
<svg class="r" style="left:28px;top:778px;" width="17" height="16" viewBox="0 0 17 16"><path d="M2.5 2 V13.5 H14" fill="none" stroke="#c8c8c8" stroke-width="1.2"/><path d="M2.5 0 L4.5 2.5 H0.5 Z M16 13.5 L13.5 11.5 V15.5 Z" fill="#c8c8c8"/><path d="M8.5 4.5 L11.5 6.2 V9.8 L8.5 11.5 L5.5 9.8 V6.2 Z M5.8 6.5 L8.5 8 L11.2 6.5 M8.5 8 V11" fill="none" stroke="#c8c8c8" stroke-width="1.1"/><path d="M11 5 L14 2 M14.5 1.5 L12 2 L14 4 Z" stroke="#c8c8c8" fill="#c8c8c8" stroke-width="1"/><circle cx="4.5" cy="11.5" r="0.8" fill="#c8c8c8"/></svg>
<div class="t" style="left:48.3px;top:779.06px;font-size:10.5px;line-height:15px;color:#ffffff;transform:scaleX(0.9671);transform-origin:0 0;">TRAM DIM</div>
<svg class="r" style="left:13px;top:798px;" width="9" height="9" viewBox="0 0 9 9"><rect x="0" y="0" width="9" height="9" fill="#e8e8e8"/><rect x="0.5" y="0.5" width="8" height="8" fill="none" stroke="#b0b0b0"/><path d="M2 4.5 H7 M4.5 2 V7" stroke="#2040a0" stroke-width="1.1"/></svg>
<svg class="r" style="left:28px;top:794px;" width="17" height="16" viewBox="0 0 17 16"><path d="M2.5 2 V13.5 H14" fill="none" stroke="#c8c8c8" stroke-width="1.2"/><path d="M2.5 0 L4.5 2.5 H0.5 Z M16 13.5 L13.5 11.5 V15.5 Z" fill="#c8c8c8"/><path d="M8.5 4.5 L11.5 6.2 V9.8 L8.5 11.5 L5.5 9.8 V6.2 Z M5.8 6.5 L8.5 8 L11.2 6.5 M8.5 8 V11" fill="none" stroke="#c8c8c8" stroke-width="1.1"/><path d="M11 5 L14 2 M14.5 1.5 L12 2 L14 4 Z" stroke="#c8c8c8" fill="#c8c8c8" stroke-width="1"/><circle cx="4.5" cy="11.5" r="0.8" fill="#c8c8c8"/></svg>
<div class="t" style="left:48.3px;top:795.06px;font-size:10.5px;line-height:15px;color:#ffffff;transform:scaleX(0.9559);transform-origin:0 0;">DRIVER DIM</div>
<svg class="r" style="left:13px;top:814px;" width="9" height="9" viewBox="0 0 9 9"><rect x="0" y="0" width="9" height="9" fill="#e8e8e8"/><rect x="0.5" y="0.5" width="8" height="8" fill="none" stroke="#b0b0b0"/><path d="M2 4.5 H7 M4.5 2 V7" stroke="#2040a0" stroke-width="1.1"/></svg>
<svg class="r" style="left:28px;top:810px;" width="17" height="16" viewBox="0 0 17 16"><path d="M2.5 2 V13.5 H14" fill="none" stroke="#c8c8c8" stroke-width="1.2"/><path d="M2.5 0 L4.5 2.5 H0.5 Z M16 13.5 L13.5 11.5 V15.5 Z" fill="#c8c8c8"/><path d="M8.5 4.5 L11.5 6.2 V9.8 L8.5 11.5 L5.5 9.8 V6.2 Z M5.8 6.5 L8.5 8 L11.2 6.5 M8.5 8 V11" fill="none" stroke="#c8c8c8" stroke-width="1.1"/><path d="M11 5 L14 2 M14.5 1.5 L12 2 L14 4 Z" stroke="#c8c8c8" fill="#c8c8c8" stroke-width="1"/><circle cx="4.5" cy="11.5" r="0.8" fill="#c8c8c8"/></svg>
<div class="t" style="left:48.3px;top:811.06px;font-size:10.5px;line-height:15px;color:#ffffff;transform:scaleX(0.9507);transform-origin:0 0;">ROUTE DIM</div>
<svg class="r" style="left:13px;top:830px;" width="9" height="9" viewBox="0 0 9 9"><rect x="0" y="0" width="9" height="9" fill="#e8e8e8"/><rect x="0.5" y="0.5" width="8" height="8" fill="none" stroke="#b0b0b0"/><path d="M2 4.5 H7 M4.5 2 V7" stroke="#2040a0" stroke-width="1.1"/></svg>
<svg class="r" style="left:28px;top:826px;" width="17" height="16" viewBox="0 0 17 16"><path d="M2.5 2 V13.5 H14" fill="none" stroke="#c8c8c8" stroke-width="1.2"/><path d="M2.5 0 L4.5 2.5 H0.5 Z M16 13.5 L13.5 11.5 V15.5 Z" fill="#c8c8c8"/><path d="M8.5 4.5 L11.5 6.2 V9.8 L8.5 11.5 L5.5 9.8 V6.2 Z M5.8 6.5 L8.5 8 L11.2 6.5 M8.5 8 V11" fill="none" stroke="#c8c8c8" stroke-width="1.1"/><path d="M11 5 L14 2 M14.5 1.5 L12 2 L14 4 Z" stroke="#c8c8c8" fill="#c8c8c8" stroke-width="1"/><circle cx="4.5" cy="11.5" r="0.8" fill="#c8c8c8"/></svg>
<div class="t" style="left:48.3px;top:827.06px;font-size:10.5px;line-height:15px;color:#ffffff;transform:scaleX(0.9722);transform-origin:0 0;">DATE DIM</div>
<svg class="r" style="left:13px;top:846px;" width="9" height="9" viewBox="0 0 9 9"><rect x="0" y="0" width="9" height="9" fill="#e8e8e8"/><rect x="0.5" y="0.5" width="8" height="8" fill="none" stroke="#b0b0b0"/><path d="M2 4.5 H7 M4.5 2 V7" stroke="#2040a0" stroke-width="1.1"/></svg>
<svg class="r" style="left:28px;top:842px;" width="17" height="16" viewBox="0 0 17 16"><path d="M2.5 2 V13.5 H14" fill="none" stroke="#c8c8c8" stroke-width="1.2"/><path d="M2.5 0 L4.5 2.5 H0.5 Z M16 13.5 L13.5 11.5 V15.5 Z" fill="#c8c8c8"/><path d="M8.5 4.5 L11.5 6.2 V9.8 L8.5 11.5 L5.5 9.8 V6.2 Z M5.8 6.5 L8.5 8 L11.2 6.5 M8.5 8 V11" fill="none" stroke="#c8c8c8" stroke-width="1.1"/><path d="M11 5 L14 2 M14.5 1.5 L12 2 L14 4 Z" stroke="#c8c8c8" fill="#c8c8c8" stroke-width="1"/><circle cx="4.5" cy="11.5" r="0.8" fill="#c8c8c8"/></svg>
<div class="t" style="left:48.3px;top:843.06px;font-size:10.5px;line-height:15px;color:#ffffff;transform:scaleX(0.9529);transform-origin:0 0;">STOP DIM</div>
<svg class="r" style="left:13px;top:862px;" width="9" height="9" viewBox="0 0 9 9"><rect x="0" y="0" width="9" height="9" fill="#e8e8e8"/><rect x="0.5" y="0.5" width="8" height="8" fill="none" stroke="#b0b0b0"/><path d="M2 4.5 H7 M4.5 2 V7" stroke="#2040a0" stroke-width="1.1"/></svg>
<svg class="r" style="left:28px;top:858px;" width="17" height="16" viewBox="0 0 17 16"><path d="M2.5 2 V13.5 H14" fill="none" stroke="#c8c8c8" stroke-width="1.2"/><path d="M2.5 0 L4.5 2.5 H0.5 Z M16 13.5 L13.5 11.5 V15.5 Z" fill="#c8c8c8"/><path d="M8.5 4.5 L11.5 6.2 V9.8 L8.5 11.5 L5.5 9.8 V6.2 Z M5.8 6.5 L8.5 8 L11.2 6.5 M8.5 8 V11" fill="none" stroke="#c8c8c8" stroke-width="1.1"/><path d="M11 5 L14 2 M14.5 1.5 L12 2 L14 4 Z" stroke="#c8c8c8" fill="#c8c8c8" stroke-width="1"/><circle cx="4.5" cy="11.5" r="0.8" fill="#c8c8c8"/></svg>
<div class="t" style="left:48.3px;top:859.06px;font-size:10.5px;line-height:15px;color:#ffffff;transform:scaleX(0.9757);transform-origin:0 0;">TIME DIM</div>
<svg class="r" style="left:13px;top:878px;" width="9" height="9" viewBox="0 0 9 9"><rect x="0" y="0" width="9" height="9" fill="#e8e8e8"/><rect x="0.5" y="0.5" width="8" height="8" fill="none" stroke="#b0b0b0"/><path d="M2 4.5 H7 M4.5 2 V7" stroke="#2040a0" stroke-width="1.1"/></svg>
<svg class="r" style="left:28px;top:874px;" width="17" height="16" viewBox="0 0 17 16"><path d="M2.5 2 V13.5 H14" fill="none" stroke="#c8c8c8" stroke-width="1.2"/><path d="M2.5 0 L4.5 2.5 H0.5 Z M16 13.5 L13.5 11.5 V15.5 Z" fill="#c8c8c8"/><path d="M8.5 4.5 L11.5 6.2 V9.8 L8.5 11.5 L5.5 9.8 V6.2 Z M5.8 6.5 L8.5 8 L11.2 6.5 M8.5 8 V11" fill="none" stroke="#c8c8c8" stroke-width="1.1"/><path d="M11 5 L14 2 M14.5 1.5 L12 2 L14 4 Z" stroke="#c8c8c8" fill="#c8c8c8" stroke-width="1"/><circle cx="4.5" cy="11.5" r="0.8" fill="#c8c8c8"/></svg>
<div class="t" style="left:48.3px;top:875.06px;font-size:10.5px;line-height:15px;color:#ffffff;transform:scaleX(0.9828);transform-origin:0 0;">TRIP DIM</div>
<div class="r" style="left:326px;top:144px;width:1952px;height:24px;border-top:1px solid #a0a0a0;border-left:1px solid #a0a0a0;border-right:1px solid #ffffff;border-bottom:1px solid #f4f4f4;box-sizing:border-box;"></div>
<div class="t" style="left:329.5px;top:149.66px;font-size:10.5px;line-height:15px;color:#ffffff;transform:scaleX(1.0015);transform-origin:0 0;">Data Source View</div>
<div class="r" style="left:326px;top:168px;width:1952px;height:1123px;border-left:1px solid #8a8a8a;border-right:1px solid #e0e0e0;border-bottom:1px solid #e0e0e0;border-top:2px solid #a0a0a0;box-sizing:border-box;"></div>
<div class="r" style="left:2259px;top:170px;width:17px;height:1101px;background:repeating-conic-gradient(#ececec 0 25%, #ffffff 0 50%) 0 0/2px 2px;"></div>
<div class="r" style="left:2259px;top:170px;width:17px;height:16px;background:#f0f0f0;border-right:1px solid #696969;border-bottom:1px solid #696969;box-shadow:inset -1px -1px #a0a0a0, inset 1px 1px #ffffff;box-sizing:border-box;"></div>
<svg class="r" style="left:2262px;top:175px;" width="11" height="6" viewBox="0 0 11 6"><path d="M1 5 L5.5 0.5 L10 5 Z" fill="#000"/></svg>
<div class="r" style="left:2259px;top:298px;width:17px;height:807px;background:#ececec;border-right:1px solid #696969;border-bottom:1px solid #696969;box-shadow:inset -1px -1px #a0a0a0, inset 1px 1px #ffffff;box-sizing:border-box;"></div>
<div class="r" style="left:2259px;top:1255px;width:17px;height:16px;background:#f0f0f0;border-right:1px solid #696969;border-bottom:1px solid #696969;box-shadow:inset -1px -1px #a0a0a0, inset 1px 1px #ffffff;box-sizing:border-box;"></div>
<svg class="r" style="left:2262px;top:1260px;" width="11" height="6" viewBox="0 0 11 6"><path d="M1 1 L5.5 5.5 L10 1 Z" fill="#000"/></svg>
<div class="r" style="left:327px;top:1271px;width:1932px;height:17px;background:repeating-conic-gradient(#ececec 0 25%, #ffffff 0 50%) 0 0/2px 2px;"></div>
<div class="r" style="left:327px;top:1271px;width:17px;height:17px;background:#f0f0f0;border-right:1px solid #696969;border-bottom:1px solid #696969;box-shadow:inset -1px -1px #a0a0a0, inset 1px 1px #ffffff;box-sizing:border-box;"></div>
<svg class="r" style="left:332px;top:1274px;" width="6" height="11" viewBox="0 0 6 11"><path d="M5 1 L0.5 5.5 L5 10 Z" fill="#000"/></svg>
<div class="r" style="left:344px;top:1271px;width:1880px;height:17px;background:#ececec;border-right:1px solid #696969;border-bottom:1px solid #696969;box-shadow:inset -1px -1px #a0a0a0, inset 1px 1px #ffffff;box-sizing:border-box;"></div>
<div class="r" style="left:2242px;top:1271px;width:17px;height:17px;background:#f0f0f0;border-right:1px solid #696969;border-bottom:1px solid #696969;box-shadow:inset -1px -1px #a0a0a0, inset 1px 1px #ffffff;box-sizing:border-box;"></div>
<svg class="r" style="left:2248px;top:1274px;" width="6" height="11" viewBox="0 0 6 11"><path d="M1 1 L5.5 5.5 L1 10 Z" fill="#000"/></svg>
<div class="r" style="left:2259px;top:1271px;width:17px;height:17px;background:#ffffff;"></div>
<svg class="r" style="left:2259px;top:1271px;" width="17" height="17" viewBox="0 0 17 17"><path d="M8.5 1 V16 M1 8.5 H16" stroke="#000" stroke-width="1.4"/><path d="M8.5 0.5 L6 3.5 H11 Z M8.5 16.5 L6 13.5 H11 Z M0.5 8.5 L3.5 6 V11 Z M16.5 8.5 L13.5 6 V11 Z" fill="#000"/></svg>
<div class="r" style="left:1336px;top:569px;width:1px;height:102px;background:#ffffff;"></div>
<div class="r" style="left:1247px;top:569px;width:90px;height:1px;background:#ffffff;"></div>
<div class="r" style="left:1247px;top:470px;width:1px;height:100px;background:#ffffff;"></div>
<svg class="r" style="left:1242px;top:461px;" width="11" height="10" viewBox="0 0 11 10"><path d="M5 0 L10 9 L0 9 Z" fill="#f0f0f0"/></svg>
<div class="r" style="left:1409px;top:569px;width:1px;height:102px;background:#ffffff;"></div>
<div class="r" style="left:1409px;top:569px;width:120px;height:1px;background:#ffffff;"></div>
<div class="r" style="left:1528px;top:470px;width:1px;height:100px;background:#ffffff;"></div>
<svg class="r" style="left:1523px;top:461px;" width="11" height="10" viewBox="0 0 11 10"><path d="M5 0 L10 9 L0 9 Z" fill="#f0f0f0"/></svg>
<div class="r" style="left:1223px;top:732px;width:55px;height:1px;background:#ffffff;"></div>
<div class="r" style="left:1223px;top:661px;width:1px;height:72px;background:#ffffff;"></div>
<div class="r" style="left:1182px;top:661px;width:42px;height:1px;background:#ffffff;"></div>
<svg class="r" style="left:1173px;top:656px;" width="10" height="11" viewBox="0 0 10 11"><path d="M0 5 L9 0 L9 10 Z" fill="#f0f0f0"/></svg>
<div class="r" style="left:1223px;top:805px;width:55px;height:1px;background:#ffffff;"></div>
<div class="r" style="left:1223px;top:805px;width:1px;height:106px;background:#ffffff;"></div>
<div class="r" style="left:1179px;top:910px;width:45px;height:1px;background:#ffffff;"></div>
<svg class="r" style="left:1170px;top:905px;" width="10" height="11" viewBox="0 0 10 11"><path d="M0 5 L9 0 L9 10 Z" fill="#f0f0f0"/></svg>
<div class="r" style="left:1491px;top:732px;width:53px;height:1px;background:#ffffff;"></div>
<div class="r" style="left:1543px;top:674px;width:1px;height:59px;background:#ffffff;"></div>
<div class="r" style="left:1543px;top:674px;width:45px;height:1px;background:#ffffff;"></div>
<svg class="r" style="left:1587px;top:669px;" width="10" height="11" viewBox="0 0 10 11"><path d="M9 5 L0 0 L0 10 Z" fill="#f0f0f0"/></svg>
<div class="r" style="left:1491px;top:805px;width:53px;height:1px;background:#ffffff;"></div>
<div class="r" style="left:1543px;top:805px;width:1px;height:116px;background:#ffffff;"></div>
<div class="r" style="left:1543px;top:920px;width:45px;height:1px;background:#ffffff;"></div>
<svg class="r" style="left:1587px;top:915px;" width="10" height="11" viewBox="0 0 10 11"><path d="M9 5 L0 0 L0 10 Z" fill="#f0f0f0"/></svg>
<div class="r" style="left:1336px;top:891px;width:1px;height:116px;background:#ffffff;"></div>
<div class="r" style="left:1242px;top:1006px;width:95px;height:1px;background:#ffffff;"></div>
<div class="r" style="left:1242px;top:1006px;width:1px;height:100px;background:#ffffff;"></div>
<svg class="r" style="left:1237px;top:1105px;" width="11" height="10" viewBox="0 0 11 10"><path d="M5 9 L10 0 L0 0 Z" fill="#f0f0f0"/></svg>
<div class="r" style="left:1409px;top:891px;width:1px;height:116px;background:#ffffff;"></div>
<div class="r" style="left:1409px;top:1006px;width:105px;height:1px;background:#ffffff;"></div>
<div class="r" style="left:1513px;top:1006px;width:1px;height:100px;background:#ffffff;"></div>
<svg class="r" style="left:1508px;top:1105px;" width="11" height="10" viewBox="0 0 11 10"><path d="M5 9 L10 0 L0 0 Z" fill="#f0f0f0"/></svg>
<div class="r" style="left:1155px;top:341px;width:184px;height:120px;background:#ffffff;border:1px solid #707070;box-sizing:border-box;"></div>
<div class="r" style="left:1156px;top:342px;width:182px;height:23px;background:#4479da;"></div>
<div class="r" style="left:1156px;top:365px;width:182px;height:1px;background:#707070;"></div>
<svg class="r" style="left:1159px;top:344px;" width="18" height="17" viewBox="0 0 18 17"><rect x="0.5" y="0.5" width="17" height="16" rx="1.5" fill="#3a3a3a"/><rect x="2" y="2" width="14" height="13" fill="#c4c4c4"/><path d="M3 6 H15 M3 9.5 H15 M3 13 H15" stroke="#1e1e1e" stroke-width="1.8" stroke-dasharray="3 1.5"/></svg>
<div class="t" style="left:1182.5px;top:344.21px;font-size:11.8px;line-height:17px;color:#ffffff;">MALFUNCTION_DIM</div>
<svg class="r" style="left:1159px;top:372px;" width="17" height="10" viewBox="0 0 17 10"><path d="M1 4 H10" stroke="#555" stroke-width="3"/><path d="M3 6 V9 M6 6 V9" stroke="#555" stroke-width="1.5"/><circle cx="12.5" cy="5" r="3.6" fill="#d0d0d0" stroke="#555" stroke-width="1.8"/><circle cx="12.5" cy="5" r="1" fill="#333"/></svg>
<div class="t" style="left:1182.5px;top:367.20px;font-size:12.7px;line-height:18px;color:#000000;">ID_Malfunction</div>
<div class="t" style="left:1182.5px;top:386.20px;font-size:12.7px;line-height:18px;color:#000000;">malfunction_type</div>
<div class="t" style="left:1182.5px;top:405.20px;font-size:12.7px;line-height:18px;color:#000000;">malfunction_description</div>
<div class="t" style="left:1182.5px;top:424.20px;font-size:12.7px;line-height:18px;color:#000000;">on_site_repair_possible</div>
<div class="r" style="left:1445px;top:240px;width:166px;height:221px;background:#ffffff;border:1px solid #707070;box-sizing:border-box;"></div>
<div class="r" style="left:1446px;top:241px;width:164px;height:23px;background:#4479da;"></div>
<div class="r" style="left:1446px;top:264px;width:164px;height:1px;background:#707070;"></div>
<svg class="r" style="left:1449px;top:243px;" width="18" height="17" viewBox="0 0 18 17"><rect x="0.5" y="0.5" width="17" height="16" rx="1.5" fill="#3a3a3a"/><rect x="2" y="2" width="14" height="13" fill="#c4c4c4"/><path d="M3 6 H15 M3 9.5 H15 M3 13 H15" stroke="#1e1e1e" stroke-width="1.8" stroke-dasharray="3 1.5"/></svg>
<div class="t" style="left:1472.5px;top:243.21px;font-size:11.8px;line-height:17px;color:#ffffff;">DATE_DIM</div>
<svg class="r" style="left:1449px;top:271px;" width="17" height="10" viewBox="0 0 17 10"><path d="M1 4 H10" stroke="#555" stroke-width="3"/><path d="M3 6 V9 M6 6 V9" stroke="#555" stroke-width="1.5"/><circle cx="12.5" cy="5" r="3.6" fill="#d0d0d0" stroke="#555" stroke-width="1.8"/><circle cx="12.5" cy="5" r="1" fill="#333"/></svg>
<div class="t" style="left:1472.5px;top:266.20px;font-size:12.7px;line-height:18px;color:#000000;">ID_Date</div>
<div class="t" style="left:1472.5px;top:285.20px;font-size:12.7px;line-height:18px;color:#000000;">full_date</div>
<div class="t" style="left:1472.5px;top:304.20px;font-size:12.7px;line-height:18px;color:#000000;">day_of_month</div>
<div class="t" style="left:1472.5px;top:323.20px;font-size:12.7px;line-height:18px;color:#000000;">month</div>
<div class="t" style="left:1472.5px;top:342.20px;font-size:12.7px;line-height:18px;color:#000000;">month_name</div>
<div class="t" style="left:1472.5px;top:361.20px;font-size:12.7px;line-height:18px;color:#000000;">year</div>
<div class="t" style="left:1472.5px;top:380.20px;font-size:12.7px;line-height:18px;color:#000000;">day_of_week</div>
<div class="t" style="left:1472.5px;top:399.20px;font-size:12.7px;line-height:18px;color:#000000;">day_of_week_name</div>
<div class="t" style="left:1472.5px;top:418.20px;font-size:12.7px;line-height:18px;color:#000000;">is_working_day</div>
<div class="t" style="left:1472.5px;top:437.20px;font-size:12.7px;line-height:18px;color:#000000;">holiday_name</div>
<div class="r" style="left:994px;top:591px;width:179px;height:140px;background:#ffffff;border:1px solid #707070;box-sizing:border-box;"></div>
<div class="r" style="left:995px;top:592px;width:177px;height:23px;background:#4479da;"></div>
<div class="r" style="left:995px;top:615px;width:177px;height:1px;background:#707070;"></div>
<svg class="r" style="left:998px;top:594px;" width="18" height="17" viewBox="0 0 18 17"><rect x="0.5" y="0.5" width="17" height="16" rx="1.5" fill="#3a3a3a"/><rect x="2" y="2" width="14" height="13" fill="#c4c4c4"/><path d="M3 6 H15 M3 9.5 H15 M3 13 H15" stroke="#1e1e1e" stroke-width="1.8" stroke-dasharray="3 1.5"/></svg>
<div class="t" style="left:1021.5px;top:594.21px;font-size:11.8px;line-height:17px;color:#ffffff;">TRIP_DIM</div>
<svg class="r" style="left:998px;top:622px;" width="17" height="10" viewBox="0 0 17 10"><path d="M1 4 H10" stroke="#555" stroke-width="3"/><path d="M3 6 V9 M6 6 V9" stroke="#555" stroke-width="1.5"/><circle cx="12.5" cy="5" r="3.6" fill="#d0d0d0" stroke="#555" stroke-width="1.8"/><circle cx="12.5" cy="5" r="1" fill="#333"/></svg>
<div class="t" style="left:1021.5px;top:617.20px;font-size:12.7px;line-height:18px;color:#000000;">ID_Trip</div>
<div class="t" style="left:1021.5px;top:636.20px;font-size:12.7px;line-height:18px;color:#000000;">trip_headsign</div>
<div class="t" style="left:1021.5px;top:655.20px;font-size:12.7px;line-height:18px;color:#000000;">trip_short_name</div>
<div class="t" style="left:1021.5px;top:674.20px;font-size:12.7px;line-height:18px;color:#000000;">direction_id</div>
<div class="t" style="left:1021.5px;top:693.20px;font-size:12.7px;line-height:18px;color:#000000;">wheelchair_accessible</div>
<div class="r" style="left:1596px;top:595px;width:133px;height:158px;background:#ffffff;border:1px solid #707070;box-sizing:border-box;"></div>
<div class="r" style="left:1597px;top:596px;width:131px;height:23px;background:#4479da;"></div>
<div class="r" style="left:1597px;top:619px;width:131px;height:1px;background:#707070;"></div>
<svg class="r" style="left:1600px;top:598px;" width="18" height="17" viewBox="0 0 18 17"><rect x="0.5" y="0.5" width="17" height="16" rx="1.5" fill="#3a3a3a"/><rect x="2" y="2" width="14" height="13" fill="#c4c4c4"/><path d="M3 6 H15 M3 9.5 H15 M3 13 H15" stroke="#1e1e1e" stroke-width="1.8" stroke-dasharray="3 1.5"/></svg>
<div class="t" style="left:1623.5px;top:598.21px;font-size:11.8px;line-height:17px;color:#ffffff;">STOP_DIM</div>
<svg class="r" style="left:1600px;top:626px;" width="17" height="10" viewBox="0 0 17 10"><path d="M1 4 H10" stroke="#555" stroke-width="3"/><path d="M3 6 V9 M6 6 V9" stroke="#555" stroke-width="1.5"/><circle cx="12.5" cy="5" r="3.6" fill="#d0d0d0" stroke="#555" stroke-width="1.8"/><circle cx="12.5" cy="5" r="1" fill="#333"/></svg>
<div class="t" style="left:1623.5px;top:621.20px;font-size:12.7px;line-height:18px;color:#000000;">ID_Stop</div>
<div class="t" style="left:1623.5px;top:640.20px;font-size:12.7px;line-height:18px;color:#000000;">stop_name</div>
<div class="t" style="left:1623.5px;top:659.20px;font-size:12.7px;line-height:18px;color:#000000;">stop_lat</div>
<div class="t" style="left:1623.5px;top:678.20px;font-size:12.7px;line-height:18px;color:#000000;">stop_lon</div>
<div class="t" style="left:1623.5px;top:697.20px;font-size:12.7px;line-height:18px;color:#000000;">stop_code</div>
<div class="t" style="left:1623.5px;top:716.20px;font-size:12.7px;line-height:18px;color:#000000;">district</div>
<div class="r" style="left:1000px;top:813px;width:170px;height:194px;background:#ffffff;border:1px solid #707070;box-sizing:border-box;"></div>
<div class="r" style="left:1001px;top:814px;width:168px;height:23px;background:#4479da;"></div>
<div class="r" style="left:1001px;top:837px;width:168px;height:1px;background:#707070;"></div>
<svg class="r" style="left:1004px;top:816px;" width="18" height="17" viewBox="0 0 18 17"><rect x="0.5" y="0.5" width="17" height="16" rx="1.5" fill="#3a3a3a"/><rect x="2" y="2" width="14" height="13" fill="#c4c4c4"/><path d="M3 6 H15 M3 9.5 H15 M3 13 H15" stroke="#1e1e1e" stroke-width="1.8" stroke-dasharray="3 1.5"/></svg>
<div class="t" style="left:1027.5px;top:816.21px;font-size:11.8px;line-height:17px;color:#ffffff;">DRIVER_DIM</div>
<svg class="r" style="left:1004px;top:844px;" width="17" height="10" viewBox="0 0 17 10"><path d="M1 4 H10" stroke="#555" stroke-width="3"/><path d="M3 6 V9 M6 6 V9" stroke="#555" stroke-width="1.5"/><circle cx="12.5" cy="5" r="3.6" fill="#d0d0d0" stroke="#555" stroke-width="1.8"/><circle cx="12.5" cy="5" r="1" fill="#333"/></svg>
<div class="t" style="left:1027.5px;top:839.20px;font-size:12.7px;line-height:18px;color:#000000;">ID_Driver</div>
<div class="t" style="left:1027.5px;top:858.20px;font-size:12.7px;line-height:18px;color:#000000;">driver_pesel</div>
<div class="t" style="left:1027.5px;top:877.20px;font-size:12.7px;line-height:18px;color:#000000;">driver_name</div>
<div class="t" style="left:1027.5px;top:896.20px;font-size:12.7px;line-height:18px;color:#000000;">driver_surname</div>
<div class="t" style="left:1027.5px;top:915.20px;font-size:12.7px;line-height:18px;color:#000000;">experience_category</div>
<div class="t" style="left:1027.5px;top:934.20px;font-size:12.7px;line-height:18px;color:#000000;">row_effective_date</div>
<div class="t" style="left:1027.5px;top:953.20px;font-size:12.7px;line-height:18px;color:#000000;">row_expiration_date</div>
<div class="t" style="left:1027.5px;top:972.20px;font-size:12.7px;line-height:18px;color:#000000;">IsCurrent</div>
<div class="r" style="left:1596px;top:859px;width:151px;height:121px;background:#ffffff;border:1px solid #707070;box-sizing:border-box;"></div>
<div class="r" style="left:1597px;top:860px;width:149px;height:23px;background:#4479da;"></div>
<div class="r" style="left:1597px;top:883px;width:149px;height:1px;background:#707070;"></div>
<svg class="r" style="left:1600px;top:862px;" width="18" height="17" viewBox="0 0 18 17"><rect x="0.5" y="0.5" width="17" height="16" rx="1.5" fill="#3a3a3a"/><rect x="2" y="2" width="14" height="13" fill="#c4c4c4"/><path d="M3 6 H15 M3 9.5 H15 M3 13 H15" stroke="#1e1e1e" stroke-width="1.8" stroke-dasharray="3 1.5"/></svg>
<div class="t" style="left:1623.5px;top:862.21px;font-size:11.8px;line-height:17px;color:#ffffff;">TRAM_DIM</div>
<svg class="r" style="left:1600px;top:890px;" width="17" height="10" viewBox="0 0 17 10"><path d="M1 4 H10" stroke="#555" stroke-width="3"/><path d="M3 6 V9 M6 6 V9" stroke="#555" stroke-width="1.5"/><circle cx="12.5" cy="5" r="3.6" fill="#d0d0d0" stroke="#555" stroke-width="1.8"/><circle cx="12.5" cy="5" r="1" fill="#333"/></svg>
<div class="t" style="left:1623.5px;top:885.20px;font-size:12.7px;line-height:18px;color:#000000;">ID_Tram</div>
<div class="t" style="left:1623.5px;top:904.20px;font-size:12.7px;line-height:18px;color:#000000;">model</div>
<div class="t" style="left:1623.5px;top:923.20px;font-size:12.7px;line-height:18px;color:#000000;">production_year</div>
<div class="t" style="left:1623.5px;top:942.20px;font-size:12.7px;line-height:18px;color:#000000;">last_service_date</div>
<div class="r" style="left:1166px;top:1114px;width:153px;height:121px;background:#ffffff;border:1px solid #707070;box-sizing:border-box;"></div>
<div class="r" style="left:1167px;top:1115px;width:151px;height:23px;background:#4479da;"></div>
<div class="r" style="left:1167px;top:1138px;width:151px;height:1px;background:#707070;"></div>
<svg class="r" style="left:1170px;top:1117px;" width="18" height="17" viewBox="0 0 18 17"><rect x="0.5" y="0.5" width="17" height="16" rx="1.5" fill="#3a3a3a"/><rect x="2" y="2" width="14" height="13" fill="#c4c4c4"/><path d="M3 6 H15 M3 9.5 H15 M3 13 H15" stroke="#1e1e1e" stroke-width="1.8" stroke-dasharray="3 1.5"/></svg>
<div class="t" style="left:1193.5px;top:1117.21px;font-size:11.8px;line-height:17px;color:#ffffff;">ROUTE_DIM</div>
<svg class="r" style="left:1170px;top:1145px;" width="17" height="10" viewBox="0 0 17 10"><path d="M1 4 H10" stroke="#555" stroke-width="3"/><path d="M3 6 V9 M6 6 V9" stroke="#555" stroke-width="1.5"/><circle cx="12.5" cy="5" r="3.6" fill="#d0d0d0" stroke="#555" stroke-width="1.8"/><circle cx="12.5" cy="5" r="1" fill="#333"/></svg>
<div class="t" style="left:1193.5px;top:1140.20px;font-size:12.7px;line-height:18px;color:#000000;">ID_Route</div>
<div class="t" style="left:1193.5px;top:1159.20px;font-size:12.7px;line-height:18px;color:#000000;">route_short_name</div>
<div class="t" style="left:1193.5px;top:1178.20px;font-size:12.7px;line-height:18px;color:#000000;">route_long_name</div>
<div class="t" style="left:1193.5px;top:1197.20px;font-size:12.7px;line-height:18px;color:#000000;">route_color</div>
<div class="r" style="left:1425px;top:1114px;width:176px;height:139px;background:#ffffff;border:1px solid #707070;box-sizing:border-box;"></div>
<div class="r" style="left:1426px;top:1115px;width:174px;height:23px;background:#4479da;"></div>
<div class="r" style="left:1426px;top:1138px;width:174px;height:1px;background:#707070;"></div>
<svg class="r" style="left:1429px;top:1117px;" width="18" height="17" viewBox="0 0 18 17"><rect x="0.5" y="0.5" width="17" height="16" rx="1.5" fill="#3a3a3a"/><rect x="2" y="2" width="14" height="13" fill="#c4c4c4"/><path d="M3 6 H15 M3 9.5 H15 M3 13 H15" stroke="#1e1e1e" stroke-width="1.8" stroke-dasharray="3 1.5"/></svg>
<div class="t" style="left:1452.5px;top:1117.21px;font-size:11.8px;line-height:17px;color:#ffffff;">TIME_DIM</div>
<svg class="r" style="left:1429px;top:1145px;" width="17" height="10" viewBox="0 0 17 10"><path d="M1 4 H10" stroke="#555" stroke-width="3"/><path d="M3 6 V9 M6 6 V9" stroke="#555" stroke-width="1.5"/><circle cx="12.5" cy="5" r="3.6" fill="#d0d0d0" stroke="#555" stroke-width="1.8"/><circle cx="12.5" cy="5" r="1" fill="#333"/></svg>
<div class="t" style="left:1452.5px;top:1140.20px;font-size:12.7px;line-height:18px;color:#000000;">ID_Time</div>
<div class="t" style="left:1452.5px;top:1159.20px;font-size:12.7px;line-height:18px;color:#000000;">full_time</div>
<div class="t" style="left:1452.5px;top:1178.20px;font-size:12.7px;line-height:18px;color:#000000;">hour</div>
<div class="t" style="left:1452.5px;top:1197.20px;font-size:12.7px;line-height:18px;color:#000000;">minute</div>
<div class="t" style="left:1452.5px;top:1216.20px;font-size:12.7px;line-height:18px;color:#000000;">time_of_day_category</div>
<div class="r" style="left:1277px;top:670px;width:214px;height:221px;background:#ffffff;border:1px solid #707070;box-sizing:border-box;"></div>
<div class="r" style="left:1278px;top:671px;width:212px;height:23px;background:#f7f77c;"></div>
<div class="r" style="left:1278px;top:694px;width:212px;height:1px;background:#707070;"></div>
<svg class="r" style="left:1281px;top:673px;" width="18" height="17" viewBox="0 0 18 17"><rect x="0.5" y="0.5" width="17" height="16" rx="1.5" fill="#3a3a3a"/><rect x="2" y="2" width="14" height="13" fill="#c4c4c4"/><path d="M3 6 H15 M3 9.5 H15 M3 13 H15" stroke="#1e1e1e" stroke-width="1.8" stroke-dasharray="3 1.5"/></svg>
<div class="t" style="left:1304.5px;top:673.21px;font-size:11.8px;line-height:17px;color:#000000;">TRIP_OPERATIONS_FACT</div>
<svg class="r" style="left:1281px;top:701px;" width="17" height="10" viewBox="0 0 17 10"><path d="M1 4 H10" stroke="#555" stroke-width="3"/><path d="M3 6 V9 M6 6 V9" stroke="#555" stroke-width="1.5"/><circle cx="12.5" cy="5" r="3.6" fill="#d0d0d0" stroke="#555" stroke-width="1.8"/><circle cx="12.5" cy="5" r="1" fill="#333"/></svg>
<div class="t" style="left:1304.5px;top:696.20px;font-size:12.7px;line-height:18px;color:#000000;">trip_operations_id</div>
<div class="t" style="left:1304.5px;top:715.20px;font-size:12.7px;line-height:18px;color:#000000;">ID_Trip</div>
<div class="t" style="left:1304.5px;top:734.20px;font-size:12.7px;line-height:18px;color:#000000;">ID_Date</div>
<div class="t" style="left:1304.5px;top:753.20px;font-size:12.7px;line-height:18px;color:#000000;">ID_Malfunction</div>
<div class="t" style="left:1304.5px;top:772.20px;font-size:12.7px;line-height:18px;color:#000000;">ID_Route</div>
<div class="t" style="left:1304.5px;top:791.20px;font-size:12.7px;line-height:18px;color:#000000;">ID_Stop</div>
<div class="t" style="left:1304.5px;top:810.20px;font-size:12.7px;line-height:18px;color:#000000;">ID_Driver</div>
<div class="t" style="left:1304.5px;top:829.20px;font-size:12.7px;line-height:18px;color:#000000;">ID_Tram</div>
<div class="t" style="left:1304.5px;top:848.20px;font-size:12.7px;line-height:18px;color:#000000;">ID_Time</div>
<div class="t" style="left:1304.5px;top:867.20px;font-size:12.7px;line-height:18px;color:#000000;">delay_minutes</div>
<div class="r" style="left:1470px;top:695px;width:20px;height:195px;background:repeating-conic-gradient(#c4c4c4 0 25%, #ffffff 0 50%) 0 0/2px 2px;"></div>
<div class="r" style="left:1470px;top:695px;width:20px;height:20px;background:#f0f0f0;border-right:1px solid #696969;border-bottom:1px solid #696969;box-shadow:inset -1px -1px #a0a0a0, inset 1px 1px #ffffff;box-sizing:border-box;"></div>
<svg class="r" style="left:1474px;top:701px;" width="11" height="6" viewBox="0 0 11 6"><path d="M1 5 L5.5 0.5 L10 5 Z" fill="#000"/></svg>
<div class="r" style="left:1470px;top:715px;width:20px;height:20px;background:#f0f0f0;border-right:1px solid #696969;border-bottom:1px solid #696969;box-shadow:inset -1px -1px #a0a0a0, inset 1px 1px #ffffff;box-sizing:border-box;"></div>
<div class="r" style="left:1470px;top:870px;width:20px;height:20px;background:#f0f0f0;border-right:1px solid #696969;border-bottom:1px solid #696969;box-shadow:inset -1px -1px #a0a0a0, inset 1px 1px #ffffff;box-sizing:border-box;"></div>
<svg class="r" style="left:1474px;top:877px;" width="11" height="6" viewBox="0 0 11 6"><path d="M1 1 L5.5 5.5 L10 1 Z" fill="#000"/></svg>
<div class="r" style="left:2285px;top:66px;width:266px;height:747px;background:#1f1f1f;border:1px solid #333333;box-sizing:border-box;"></div>
<div class="t" style="left:2291px;top:69.48px;font-size:11.6px;line-height:17px;color:#c8c8c8;">Eksplorator rozwiązań</div>
<svg class="r" style="left:2500px;top:74px;" width="10" height="7" viewBox="0 0 10 7"><path d="M0 1 L9 1 L4.5 6 Z" fill="#d0d0d0"/></svg>
<svg class="r" style="left:2516px;top:70px;" width="12" height="14" viewBox="0 0 12 14"><path d="M3 1 H9 M4 1 V8 H2 V9 H10 V8 H8 V1 M6 9 V13" fill="none" stroke="#e0e0e0" stroke-width="1.2"/></svg>
<svg class="r" style="left:2533px;top:71px;" width="12" height="12" viewBox="0 0 12 12"><path d="M1.5 1.5 L10.5 10.5 M10.5 1.5 L1.5 10.5" stroke="#e0e0e0" stroke-width="1.2"/></svg>
<svg class="r" style="left:2292px;top:93px;" width="18" height="17" viewBox="0 0 18 17"><rect x="7" y="1.5" width="9" height="10" fill="none" stroke="#e0e0e0"/><path d="M9 4 H14 M9 6.5 H14 M9 9 H14" stroke="#e0e0e0"/><path d="M1 10 L4 12.5 L1 15 Z M4 12.5 L9 8 V16 Z" fill="none" stroke="#9b6ee0" stroke-width="1.3"/></svg>
<div class="r" style="left:2314px;top:93px;width:1px;height:18px;background:#3d3d3d;"></div>
<svg class="r" style="left:2322px;top:93px;" width="16" height="17" viewBox="0 0 16 17"><path d="M1 1 H5 L3 4 Z" fill="#4fa8f0"/><circle cx="8.5" cy="10" r="5.3" fill="none" stroke="#e0e0e0" stroke-width="1.2"/><path d="M8.5 7 V10 H11" fill="none" stroke="#e0e0e0"/></svg>
<svg class="r" style="left:2342px;top:100px;" width="8" height="5" viewBox="0 0 8 5"><path d="M0 0 L7 0 L3.5 4 Z" fill="#d0d0d0"/></svg>
<svg class="r" style="left:2358px;top:94px;" width="15" height="15" viewBox="0 0 15 15"><path d="M1 5 H13 M10 2 L13 5 M14 10 H2 M5 13 L2 10" fill="none" stroke="#e0e0e0" stroke-width="1.2"/></svg>
<svg class="r" style="left:2381px;top:94px;" width="13" height="15" viewBox="0 0 13 15"><path d="M1.5 8 L6.5 3 L11.5 8 M1.5 13 L6.5 8 L11.5 13" fill="none" stroke="#e0e0e0" stroke-width="1.2"/></svg>
<svg class="r" style="left:2401px;top:94px;" width="16" height="16" viewBox="0 0 16 16"><rect x="5.5" y="1.5" width="9" height="10" fill="none" stroke="#e0e0e0"/><rect x="1.5" y="4.5" width="9" height="10" fill="#1f1f1f" stroke="#e0e0e0"/></svg>
<div class="r" style="left:2425px;top:93px;width:1px;height:18px;background:#3d3d3d;"></div>
<svg class="r" style="left:2432px;top:93px;" width="16" height="17" viewBox="0 0 16 17"><path d="M2 15 L9 8" stroke="#e0e0e0" stroke-width="2.2"/><path d="M8 7 A4.5 4.5 0 1 1 12 11 L10.5 9.5 L12.5 7.5 L14 5 L11.5 3 Z" fill="#e0e0e0"/></svg>
<div class="r" style="left:2452px;top:91px;width:22px;height:24px;border:1px solid #8a7ae8;box-sizing:border-box;"></div>
<svg class="r" style="left:2455px;top:95px;" width="16" height="14" viewBox="0 0 16 14"><path d="M1 11 H12 M1 11 V9 H9 L10 7" fill="none" stroke="#e0e0e0" stroke-width="1.2"/><path d="M13 3 L14 1 M12 6 H15 M11 2 V0" stroke="#f0d070"/></svg>
<div class="r" style="left:2288px;top:116px;width:260px;height:21px;background:#333333;border:1px solid #3d3d3d;box-sizing:border-box;"></div>
<div class="t" style="left:2293px;top:118.48px;font-size:11.6px;line-height:17px;color:#e0e0e0;">Przeszukaj: Eksplorator rozwiązań (Ctrl+;)</div>
<svg class="r" style="left:2518px;top:119px;" width="14" height="14" viewBox="0 0 14 14"><circle cx="9" cy="5" r="3.8" fill="none" stroke="#e0e0e0" stroke-width="1.5"/><path d="M6.5 7.5 L1.5 12.5" stroke="#e0e0e0" stroke-width="2"/></svg>
<svg class="r" style="left:2536px;top:124px;" width="8" height="5" viewBox="0 0 8 5"><path d="M0 0 L7 0 L3.5 4 Z" fill="#d0d0d0"/></svg>
<div class="r" style="left:2286px;top:158px;width:264px;height:19px;background:#3d3d3d;"></div>
<svg class="r" style="left:2300px;top:140px;" width="20" height="17" viewBox="0 0 20 17"><rect x="1.5" y="1.5" width="13" height="12" fill="none" stroke="#b0b0b0"/><path d="M1.5 4.5 H14.5" stroke="#b0b0b0"/><path d="M7 10 L10 12.5 L7 15 Z M10 12.5 L15 8 V16 Z" fill="#1f1f1f" stroke="#9b6ee0" stroke-width="1.3"/></svg>
<div class="t" style="left:2321.6px;top:140.08px;font-size:11.6px;line-height:17px;color:#ffffff;">Rozwiązanie „datawarehouse” (1 projektu 1)</div>
<svg class="r" style="left:2296px;top:162px;" width="9" height="9" viewBox="0 0 9 9"><path d="M8 1 V8 H1 Z" fill="#c8c8c8"/></svg>
<svg class="r" style="left:2318px;top:159px;" width="17" height="17" viewBox="0 0 17 17"><rect x="6" y="1" width="5" height="4" fill="#c8c8c8"/><path d="M8.5 5 V8 M3 8 H14 M3 8 V11 M8.5 8 V11 M14 8 V11" stroke="#c8c8c8"/><rect x="1" y="11" width="4" height="4" fill="none" stroke="#c8c8c8"/><rect x="12" y="11" width="4" height="3" fill="#c8c8c8"/></svg>
<div class="t" style="left:2339px;top:158.98px;font-size:11.6px;line-height:17px;color:#ffffff;font-weight:bold;">datawarehouse</div>
<svg class="r" style="left:2314px;top:182px;" width="9" height="9" viewBox="0 0 9 9"><path d="M8 1 V8 H1 Z" fill="#c8c8c8"/></svg>
<svg class="r" style="left:2337px;top:179px;" width="16" height="16" viewBox="0 0 16 16"><path d="M3.5 7 V3.5 L5.5 1.5 H14.5 V14" fill="none" stroke="#c8c8c8" stroke-width="1.1"/><rect x="10.5" y="3" width="2.5" height="1.2" fill="#c8c8c8"/><path d="M0.5 7 H11.5 L13 14.5 H2 Z" fill="#c8c8c8"/></svg>
<div class="t" style="left:2357.3px;top:177.98px;font-size:11.6px;line-height:17px;color:#f0f0f0;">Data Sources</div>
<svg class="r" style="left:2355px;top:198px;" width="16" height="16" viewBox="0 0 16 16"><ellipse cx="7.5" cy="3.5" rx="5.5" ry="2" fill="#c8c8c8"/><path d="M2 3.5 V13 A5.5 2 0 0 0 13 13 V3.5" fill="#c8c8c8"/><ellipse cx="7.5" cy="3.5" rx="5.5" ry="2" fill="none" stroke="#1f1f1f" stroke-width="0.7"/></svg>
<div class="t" style="left:2375.6px;top:196.98px;font-size:11.6px;line-height:17px;color:#f0f0f0;">master.ds</div>
<svg class="r" style="left:2314px;top:220px;" width="9" height="9" viewBox="0 0 9 9"><path d="M8 1 V8 H1 Z" fill="#c8c8c8"/></svg>
<svg class="r" style="left:2337px;top:217px;" width="16" height="16" viewBox="0 0 16 16"><path d="M3.5 7 V3.5 L5.5 1.5 H14.5 V14" fill="none" stroke="#c8c8c8" stroke-width="1.1"/><rect x="10.5" y="3" width="2.5" height="1.2" fill="#c8c8c8"/><path d="M0.5 7 H11.5 L13 14.5 H2 Z" fill="#c8c8c8"/></svg>
<div class="t" style="left:2357.3px;top:215.98px;font-size:11.6px;line-height:17px;color:#f0f0f0;">Data Source Views</div>
<svg class="r" style="left:2355px;top:236px;" width="16" height="16" viewBox="0 0 16 16"><rect x="7" y="1" width="7" height="8" fill="#c8c8c8"/><rect x="1.5" y="7.5" width="6" height="6" fill="#1f1f1f" stroke="#c8c8c8"/><path d="M3 9 L6 12 M6 9 L3 12" stroke="#c8c8c8"/></svg>
<div class="t" style="left:2375.6px;top:234.98px;font-size:11.6px;line-height:17px;color:#f0f0f0;">Master.dsv</div>
<svg class="r" style="left:2314px;top:258px;" width="9" height="9" viewBox="0 0 9 9"><path d="M8 1 V8 H1 Z" fill="#c8c8c8"/></svg>
<svg class="r" style="left:2337px;top:255px;" width="16" height="16" viewBox="0 0 16 16"><path d="M3.5 7 V3.5 L5.5 1.5 H14.5 V14" fill="none" stroke="#c8c8c8" stroke-width="1.1"/><rect x="10.5" y="3" width="2.5" height="1.2" fill="#c8c8c8"/><path d="M0.5 7 H11.5 L13 14.5 H2 Z" fill="#c8c8c8"/></svg>
<div class="t" style="left:2357.3px;top:253.98px;font-size:11.6px;line-height:17px;color:#f0f0f0;">Cubes</div>
<svg class="r" style="left:2355px;top:273px;" width="16" height="16" viewBox="0 0 16 16"><path d="M6.5 1 L12 4.2 L12 11.3 L6.5 14.5 L1 11.3 L1 4.2 Z M1.5 4.5 L6.5 7.5 L11.5 4.5" fill="none" stroke="#c0c0c0" stroke-width="1.1"/><path d="M6.5 7.5 V14" stroke="#9a9a9a" stroke-width="1.8"/></svg>
<div class="t" style="left:2375.6px;top:272.98px;font-size:11.6px;line-height:17px;color:#f0f0f0;">TripOperationsCube.cube</div>
<svg class="r" style="left:2314px;top:296px;" width="9" height="9" viewBox="0 0 9 9"><path d="M8 1 V8 H1 Z" fill="#c8c8c8"/></svg>
<svg class="r" style="left:2337px;top:293px;" width="16" height="16" viewBox="0 0 16 16"><path d="M3.5 7 V3.5 L5.5 1.5 H14.5 V14" fill="none" stroke="#c8c8c8" stroke-width="1.1"/><rect x="10.5" y="3" width="2.5" height="1.2" fill="#c8c8c8"/><path d="M0.5 7 H11.5 L13 14.5 H2 Z" fill="#c8c8c8"/></svg>
<div class="t" style="left:2357.3px;top:291.98px;font-size:11.6px;line-height:17px;color:#f0f0f0;">Dimensions</div>
<svg class="r" style="left:2355px;top:311px;" width="16" height="16" viewBox="0 0 16 16"><path d="M2.5 2 V13.5 H13.5" fill="none" stroke="#c8c8c8" stroke-width="1.1"/><path d="M2.5 0.5 L4 2.5 H1 Z M15 13.5 L13 12 V15 Z" fill="#c8c8c8"/><path d="M3.5 12.5 L12.5 3.5" stroke="#c8c8c8" stroke-width="1.1"/><path d="M13.5 2.5 L9.5 3.2 L12.8 6.5 Z" fill="#c8c8c8"/></svg>
<div class="t" style="left:2375.6px;top:310.98px;font-size:11.6px;line-height:17px;color:#f0f0f0;">MALFUNCTION DIM.dim</div>
<svg class="r" style="left:2355px;top:330px;" width="16" height="16" viewBox="0 0 16 16"><path d="M2.5 2 V13.5 H13.5" fill="none" stroke="#c8c8c8" stroke-width="1.1"/><path d="M2.5 0.5 L4 2.5 H1 Z M15 13.5 L13 12 V15 Z" fill="#c8c8c8"/><path d="M3.5 12.5 L12.5 3.5" stroke="#c8c8c8" stroke-width="1.1"/><path d="M13.5 2.5 L9.5 3.2 L12.8 6.5 Z" fill="#c8c8c8"/></svg>
<div class="t" style="left:2375.6px;top:329.98px;font-size:11.6px;line-height:17px;color:#f0f0f0;">TRAM DIM.dim</div>
<svg class="r" style="left:2355px;top:349px;" width="16" height="16" viewBox="0 0 16 16"><path d="M2.5 2 V13.5 H13.5" fill="none" stroke="#c8c8c8" stroke-width="1.1"/><path d="M2.5 0.5 L4 2.5 H1 Z M15 13.5 L13 12 V15 Z" fill="#c8c8c8"/><path d="M3.5 12.5 L12.5 3.5" stroke="#c8c8c8" stroke-width="1.1"/><path d="M13.5 2.5 L9.5 3.2 L12.8 6.5 Z" fill="#c8c8c8"/></svg>
<div class="t" style="left:2375.6px;top:348.98px;font-size:11.6px;line-height:17px;color:#f0f0f0;">DRIVER DIM.dim</div>
<svg class="r" style="left:2355px;top:368px;" width="16" height="16" viewBox="0 0 16 16"><path d="M2.5 2 V13.5 H13.5" fill="none" stroke="#c8c8c8" stroke-width="1.1"/><path d="M2.5 0.5 L4 2.5 H1 Z M15 13.5 L13 12 V15 Z" fill="#c8c8c8"/><path d="M3.5 12.5 L12.5 3.5" stroke="#c8c8c8" stroke-width="1.1"/><path d="M13.5 2.5 L9.5 3.2 L12.8 6.5 Z" fill="#c8c8c8"/></svg>
<div class="t" style="left:2375.6px;top:367.98px;font-size:11.6px;line-height:17px;color:#f0f0f0;">ROUTE DIM.dim</div>
<svg class="r" style="left:2355px;top:387px;" width="16" height="16" viewBox="0 0 16 16"><path d="M2.5 2 V13.5 H13.5" fill="none" stroke="#c8c8c8" stroke-width="1.1"/><path d="M2.5 0.5 L4 2.5 H1 Z M15 13.5 L13 12 V15 Z" fill="#c8c8c8"/><path d="M3.5 12.5 L12.5 3.5" stroke="#c8c8c8" stroke-width="1.1"/><path d="M13.5 2.5 L9.5 3.2 L12.8 6.5 Z" fill="#c8c8c8"/></svg>
<div class="t" style="left:2375.6px;top:386.98px;font-size:11.6px;line-height:17px;color:#f0f0f0;">DATE DIM.dim</div>
<svg class="r" style="left:2355px;top:406px;" width="16" height="16" viewBox="0 0 16 16"><path d="M2.5 2 V13.5 H13.5" fill="none" stroke="#c8c8c8" stroke-width="1.1"/><path d="M2.5 0.5 L4 2.5 H1 Z M15 13.5 L13 12 V15 Z" fill="#c8c8c8"/><path d="M3.5 12.5 L12.5 3.5" stroke="#c8c8c8" stroke-width="1.1"/><path d="M13.5 2.5 L9.5 3.2 L12.8 6.5 Z" fill="#c8c8c8"/></svg>
<div class="t" style="left:2375.6px;top:405.98px;font-size:11.6px;line-height:17px;color:#f0f0f0;">STOP DIM.dim</div>
<svg class="r" style="left:2355px;top:425px;" width="16" height="16" viewBox="0 0 16 16"><path d="M2.5 2 V13.5 H13.5" fill="none" stroke="#c8c8c8" stroke-width="1.1"/><path d="M2.5 0.5 L4 2.5 H1 Z M15 13.5 L13 12 V15 Z" fill="#c8c8c8"/><path d="M3.5 12.5 L12.5 3.5" stroke="#c8c8c8" stroke-width="1.1"/><path d="M13.5 2.5 L9.5 3.2 L12.8 6.5 Z" fill="#c8c8c8"/></svg>
<div class="t" style="left:2375.6px;top:424.98px;font-size:11.6px;line-height:17px;color:#f0f0f0;">TIME DIM.dim</div>
<svg class="r" style="left:2355px;top:444px;" width="16" height="16" viewBox="0 0 16 16"><path d="M2.5 2 V13.5 H13.5" fill="none" stroke="#c8c8c8" stroke-width="1.1"/><path d="M2.5 0.5 L4 2.5 H1 Z M15 13.5 L13 12 V15 Z" fill="#c8c8c8"/><path d="M3.5 12.5 L12.5 3.5" stroke="#c8c8c8" stroke-width="1.1"/><path d="M13.5 2.5 L9.5 3.2 L12.8 6.5 Z" fill="#c8c8c8"/></svg>
<div class="t" style="left:2375.6px;top:443.98px;font-size:11.6px;line-height:17px;color:#f0f0f0;">TRIP DIM.dim</div>
<svg class="r" style="left:2337px;top:464px;" width="16" height="16" viewBox="0 0 16 16"><path d="M3.5 7 V3.5 L5.5 1.5 H14.5 V14" fill="none" stroke="#c8c8c8" stroke-width="1.1"/><rect x="10.5" y="3" width="2.5" height="1.2" fill="#c8c8c8"/><path d="M0.5 7 H11.5 L13 14.5 H2 Z" fill="#c8c8c8"/></svg>
<div class="t" style="left:2357.3px;top:462.98px;font-size:11.6px;line-height:17px;color:#f0f0f0;">Roles</div>
<svg class="r" style="left:2337px;top:483px;" width="16" height="16" viewBox="0 0 16 16"><path d="M3.5 7 V3.5 L5.5 1.5 H14.5 V14" fill="none" stroke="#c8c8c8" stroke-width="1.1"/><rect x="10.5" y="3" width="2.5" height="1.2" fill="#c8c8c8"/><path d="M0.5 7 H11.5 L13 14.5 H2 Z" fill="#c8c8c8"/></svg>
<div class="t" style="left:2357.3px;top:481.98px;font-size:11.6px;line-height:17px;color:#f0f0f0;">Assemblies</div>
<svg class="r" style="left:2337px;top:502px;" width="16" height="16" viewBox="0 0 16 16"><path d="M3.5 7 V3.5 L5.5 1.5 H14.5 V14" fill="none" stroke="#c8c8c8" stroke-width="1.1"/><rect x="10.5" y="3" width="2.5" height="1.2" fill="#c8c8c8"/><path d="M0.5 7 H11.5 L13 14.5 H2 Z" fill="#c8c8c8"/></svg>
<div class="t" style="left:2357.3px;top:500.98px;font-size:11.6px;line-height:17px;color:#f0f0f0;">Miscellaneous</div>
<div class="r" style="left:2286px;top:795px;width:264px;height:17px;background:#2b2b2b;"></div>
<svg class="r" style="left:2291px;top:798px;" width="7" height="11" viewBox="0 0 7 11"><path d="M6 1 L1 5.5 L6 10 Z" fill="#8a8a8a"/></svg>
<div class="r" style="left:2302px;top:799px;width:229px;height:9px;background:#4d4d4d;"></div>
<svg class="r" style="left:2536px;top:798px;" width="7" height="11" viewBox="0 0 7 11"><path d="M1 1 L6 5.5 L1 10 Z" fill="#8a8a8a"/></svg>
<div class="r" style="left:2285px;top:819px;width:266px;height:538px;background:#1f1f1f;border:1px solid #333333;box-sizing:border-box;"></div>
<div class="t" style="left:2290px;top:822.48px;font-size:11.6px;line-height:17px;color:#c8c8c8;">Właściwości</div>
<svg class="r" style="left:2500px;top:826px;" width="10" height="7" viewBox="0 0 10 7"><path d="M0 1 L9 1 L4.5 6 Z" fill="#d0d0d0"/></svg>
<svg class="r" style="left:2516px;top:822px;" width="12" height="14" viewBox="0 0 12 14"><path d="M3 1 H9 M4 1 V8 H2 V9 H10 V8 H8 V1 M6 9 V13" fill="none" stroke="#e0e0e0" stroke-width="1.2"/></svg>
<svg class="r" style="left:2533px;top:824px;" width="12" height="12" viewBox="0 0 12 12"><path d="M1.5 1.5 L10.5 10.5 M10.5 1.5 L1.5 10.5" stroke="#e0e0e0" stroke-width="1.2"/></svg>
<div class="r" style="left:2286px;top:841px;width:264px;height:24px;background:#333333;"></div>
<div class="t" style="left:2292px;top:843.98px;font-size:11.6px;line-height:17px;color:#ffffff;font-weight:bold;">TripOperationsCube</div>
<div class="t" style="left:2409px;top:843.98px;font-size:11.6px;line-height:17px;color:#f0f0f0;">Cube</div>
<svg class="r" style="left:2538px;top:851px;" width="8" height="5" viewBox="0 0 8 5"><path d="M0 0 L7 0 L3.5 4 Z" fill="#d0d0d0"/></svg>
<div class="r" style="left:2289px;top:867px;width:23px;height:22px;border:1px solid #8a7ae8;box-sizing:border-box;"></div>
<svg class="r" style="left:2292px;top:870px;" width="17" height="16" viewBox="0 0 17 16"><rect x="0.5" y="0.5" width="5" height="5" fill="none" stroke="#d8d8d8"/><path d="M1.5 3 H4.5 M3 1.5 V4.5" stroke="#d8d8d8"/><rect x="0.5" y="9.5" width="5" height="5" fill="none" stroke="#d8d8d8"/><path d="M1.5 12 H4.5 M3 10.5 V13.5" stroke="#d8d8d8"/><path d="M7 1.5 H15 M7 3.5 H15 M7 5.5 H13 M7 10.5 H15 M7 12.5 H12 M14 14 H15" stroke="#d8d8d8" stroke-width="1"/></svg>
<svg class="r" style="left:2314px;top:870px;" width="17" height="16" viewBox="0 0 17 16"><rect x="0.5" y="0.5" width="7.5" height="7" fill="#d0d0d0"/><path d="M2 6.5 L4.2 1.5 L6.5 6.5 M3 5 H5.5" fill="none" stroke="#1f1f1f" stroke-width="1"/><path d="M1 9.5 H7 L1.5 14.5 H7.5" fill="none" stroke="#d0d0d0" stroke-width="1.5"/><path d="M12.5 4 V14 M9.5 11 L12.5 14 L15.5 11" fill="none" stroke="#4fc0f0" stroke-width="1.8"/></svg>
<div class="r" style="left:2337px;top:869px;width:1px;height:19px;background:#3d3d3d;"></div>
<svg class="r" style="left:2343px;top:869px;" width="18" height="18" viewBox="0 0 18 18"><path d="M3 16 L1.5 14.5 L9 7 L11 9 Z" fill="#8a8a8a"/><circle cx="12" cy="6" r="4.8" fill="#8a8a8a"/><circle cx="13" cy="5" r="1.3" fill="#1f1f1f"/><path d="M4 13 L6 15" stroke="#1f1f1f" stroke-width="0.8"/></svg>
<div class="r" style="left:2286px;top:891px;width:264px;height:402px;background:#333333;"></div>
<svg class="r" style="left:2289px;top:897px;" width="10" height="10" viewBox="0 0 10 10"><rect x="0.5" y="0.5" width="8" height="8" fill="none" stroke="#e8e8e8"/><path d="M2 4.5 H7" stroke="#e8e8e8"/></svg>
<div class="t" style="left:2305px;top:892.98px;font-size:11.6px;line-height:17px;color:#ffffff;font-weight:bold;">Advanced</div>
<div class="r" style="left:2301px;top:912px;width:98px;height:18px;background:#1f1f1f;"></div>
<div class="r" style="left:2400px;top:912px;width:132px;height:18px;background:#1f1f1f;"></div>
<div class="t clip" style="left:2305px;top:911.98px;width:94px;font-size:11.6px;line-height:17px;color:#f0f0f0;">AggregationPrefix</div>
<div class="r" style="left:2301px;top:931px;width:98px;height:18px;background:#1f1f1f;"></div>
<div class="r" style="left:2400px;top:931px;width:132px;height:18px;background:#1f1f1f;"></div>
<div class="t clip" style="left:2305px;top:930.98px;width:94px;font-size:11.6px;line-height:17px;color:#f0f0f0;">DefaultMeasure</div>
<div class="r" style="left:2301px;top:950px;width:98px;height:18px;background:#1f1f1f;"></div>
<div class="r" style="left:2400px;top:950px;width:132px;height:18px;background:#1f1f1f;"></div>
<div class="t clip" style="left:2305px;top:949.98px;width:94px;font-size:11.6px;line-height:17px;color:#f0f0f0;">ErrorConfiguration</div>
<div class="t clip" style="left:2403px;top:949.98px;width:129px;font-size:11.6px;line-height:17px;color:#f0f0f0;">(default)</div>
<div class="r" style="left:2301px;top:969px;width:98px;height:18px;background:#1f1f1f;"></div>
<div class="r" style="left:2400px;top:969px;width:132px;height:18px;background:#1f1f1f;"></div>
<div class="t clip" style="left:2305px;top:968.98px;width:94px;font-size:11.6px;line-height:17px;color:#f0f0f0;">EstimatedRows</div>
<div class="t clip" style="left:2403px;top:968.98px;width:129px;font-size:11.6px;line-height:17px;color:#f0f0f0;">0</div>
<div class="r" style="left:2301px;top:988px;width:98px;height:18px;background:#1f1f1f;"></div>
<div class="r" style="left:2400px;top:988px;width:132px;height:18px;background:#1f1f1f;"></div>
<div class="t clip" style="left:2305px;top:987.98px;width:94px;font-size:11.6px;line-height:17px;color:#f0f0f0;">Language</div>
<div class="r" style="left:2301px;top:1007px;width:98px;height:18px;background:#1f1f1f;"></div>
<div class="r" style="left:2400px;top:1007px;width:132px;height:18px;background:#1f1f1f;"></div>
<div class="t clip" style="left:2305px;top:1006.98px;width:94px;font-size:11.6px;line-height:17px;color:#f0f0f0;">ProcessingMode</div>
<div class="t clip" style="left:2403px;top:1006.98px;width:129px;font-size:11.6px;line-height:17px;color:#f0f0f0;">Regular</div>
<div class="r" style="left:2301px;top:1026px;width:98px;height:18px;background:#1f1f1f;"></div>
<div class="r" style="left:2400px;top:1026px;width:132px;height:18px;background:#1f1f1f;"></div>
<div class="t clip" style="left:2305px;top:1025.98px;width:94px;font-size:11.6px;line-height:17px;color:#f0f0f0;">ProcessingPriority</div>
<div class="t clip" style="left:2403px;top:1025.98px;width:129px;font-size:11.6px;line-height:17px;color:#f0f0f0;">0</div>
<div class="r" style="left:2301px;top:1045px;width:98px;height:18px;background:#1f1f1f;"></div>
<div class="r" style="left:2400px;top:1045px;width:132px;height:18px;background:#1f1f1f;"></div>
<div class="t clip" style="left:2305px;top:1044.98px;width:94px;font-size:11.6px;line-height:17px;color:#f0f0f0;">Source</div>
<div class="t clip" style="left:2403px;top:1044.98px;width:129px;font-size:11.6px;line-height:17px;color:#f0f0f0;">Master (Data source view)</div>
<div class="r" style="left:2301px;top:1064px;width:98px;height:18px;background:#1f1f1f;"></div>
<div class="r" style="left:2400px;top:1064px;width:132px;height:18px;background:#1f1f1f;"></div>
<div class="t clip" style="left:2305px;top:1063.98px;width:94px;font-size:11.6px;line-height:17px;color:#f0f0f0;">Visible</div>
<div class="t clip" style="left:2403px;top:1063.98px;width:129px;font-size:11.6px;line-height:17px;color:#f0f0f0;">True</div>
<svg class="r" style="left:2289px;top:1087px;" width="10" height="10" viewBox="0 0 10 10"><rect x="0.5" y="0.5" width="8" height="8" fill="none" stroke="#e8e8e8"/><path d="M2 4.5 H7" stroke="#e8e8e8"/></svg>
<div class="t" style="left:2305px;top:1082.98px;font-size:11.6px;line-height:17px;color:#ffffff;font-weight:bold;">Basic</div>
<div class="r" style="left:2301px;top:1102px;width:98px;height:18px;background:#1f1f1f;"></div>
<div class="r" style="left:2400px;top:1102px;width:132px;height:18px;background:#1f1f1f;"></div>
<div class="t clip" style="left:2305px;top:1101.98px;width:94px;font-size:11.6px;line-height:17px;color:#f0f0f0;">Description</div>
<div class="r" style="left:2301px;top:1121px;width:98px;height:18px;background:#1f1f1f;"></div>
<div class="r" style="left:2400px;top:1121px;width:132px;height:18px;background:#1f1f1f;"></div>
<div class="t clip" style="left:2305px;top:1120.98px;width:94px;font-size:11.6px;line-height:17px;color:#f0f0f0;">ID</div>
<div class="t clip" style="left:2403px;top:1120.98px;width:129px;font-size:11.6px;line-height:17px;color:#f0f0f0;">TripOperationsCube</div>
<div class="r" style="left:2301px;top:1140px;width:98px;height:18px;background:#1f1f1f;"></div>
<div class="r" style="left:2400px;top:1140px;width:132px;height:18px;background:#1f1f1f;"></div>
<div class="t clip" style="left:2305px;top:1139.98px;width:94px;font-size:11.6px;line-height:17px;color:#f0f0f0;">Name</div>
<div class="t clip" style="left:2403px;top:1139.98px;width:129px;font-size:11.6px;line-height:17px;color:#f0f0f0;font-weight:bold;color:#ffffff;">TripOperationsCube</div>
<svg class="r" style="left:2289px;top:1163px;" width="10" height="10" viewBox="0 0 10 10"><rect x="0.5" y="0.5" width="8" height="8" fill="none" stroke="#e8e8e8"/><path d="M2 4.5 H7" stroke="#e8e8e8"/></svg>
<div class="t" style="left:2305px;top:1158.98px;font-size:11.6px;line-height:17px;color:#ffffff;font-weight:bold;">Configurable</div>
<div class="r" style="left:2301px;top:1178px;width:98px;height:18px;background:#1f1f1f;"></div>
<div class="r" style="left:2400px;top:1178px;width:132px;height:18px;background:#1f1f1f;"></div>
<div class="t clip" style="left:2305px;top:1177.98px;width:94px;font-size:11.6px;line-height:17px;color:#f0f0f0;">StorageLocation</div>
<svg class="r" style="left:2289px;top:1201px;" width="10" height="10" viewBox="0 0 10 10"><rect x="0.5" y="0.5" width="8" height="8" fill="none" stroke="#e8e8e8"/><path d="M2 4.5 H7" stroke="#e8e8e8"/></svg>
<div class="t" style="left:2305px;top:1196.98px;font-size:11.6px;line-height:17px;color:#ffffff;font-weight:bold;">Różne</div>
<div class="r" style="left:2301px;top:1216px;width:98px;height:18px;background:#1f1f1f;"></div>
<div class="r" style="left:2400px;top:1216px;width:132px;height:18px;background:#1f1f1f;"></div>
<div class="t clip" style="left:2305px;top:1215.98px;width:94px;font-size:11.6px;line-height:17px;color:#f0f0f0;">Collation</div>
<div class="r" style="left:2301px;top:1235px;width:98px;height:18px;background:#1f1f1f;"></div>
<div class="r" style="left:2400px;top:1235px;width:132px;height:18px;background:#1f1f1f;"></div>
<div class="t clip" style="left:2305px;top:1234.98px;width:94px;font-size:11.6px;line-height:17px;color:#f0f0f0;">ScriptCacheProcessingMode</div>
<div class="t clip" style="left:2403px;top:1234.98px;width:129px;font-size:11.6px;line-height:17px;color:#f0f0f0;">Regular</div>
<div class="r" style="left:2301px;top:1254px;width:98px;height:18px;background:#1f1f1f;"></div>
<div class="r" style="left:2400px;top:1254px;width:132px;height:18px;background:#1f1f1f;"></div>
<div class="t clip" style="left:2305px;top:1253.98px;width:94px;font-size:11.6px;line-height:17px;color:#f0f0f0;">ScriptErrorHandlingMode</div>
<div class="t clip" style="left:2403px;top:1253.98px;width:129px;font-size:11.6px;line-height:17px;color:#f0f0f0;">IgnoreNone</div>
<svg class="r" style="left:2289px;top:1277px;" width="10" height="10" viewBox="0 0 10 10"><rect x="0.5" y="0.5" width="8" height="8" fill="none" stroke="#e8e8e8"/><path d="M2 4.5 H7" stroke="#e8e8e8"/></svg>
<div class="t" style="left:2305px;top:1272.98px;font-size:11.6px;line-height:17px;color:#ffffff;font-weight:bold;">Storage</div>
<div class="r" style="left:2301px;top:1292px;width:98px;height:1px;background:#1f1f1f;"></div>
<div class="r" style="left:2400px;top:1292px;width:132px;height:1px;background:#1f1f1f;"></div>
<svg class="r" style="left:2536px;top:896px;" width="10" height="6" viewBox="0 0 10 6"><path d="M0 5.5 L4.5 0.5 L9 5.5 Z" fill="#8a8a8a"/></svg>
<div class="r" style="left:2537px;top:909px;width:8px;height:338px;background:#4d4d4d;"></div>
<svg class="r" style="left:2536px;top:1282px;" width="10" height="6" viewBox="0 0 10 6"><path d="M0 0.5 L4.5 5.5 L9 0.5 Z" fill="#8a8a8a"/></svg>
<div class="t" style="left:2292px;top:1299.48px;font-size:11.6px;line-height:17px;color:#ffffff;font-weight:bold;">Name</div>
<div class="t" style="left:2292px;top:1317.48px;font-size:11.6px;line-height:17px;color:#f0f0f0;">Specifies the name of the object.</div>
<div class="r" style="left:3px;top:1298px;width:2276px;height:39px;background:#1f1f1f;border:1px solid #333333;box-sizing:border-box;"></div>
<div class="t" style="left:8.5px;top:1301.48px;font-size:11.6px;line-height:17px;color:#c8c8c8;">Dane wyjściowe</div>
<svg class="r" style="left:2228px;top:1306px;" width="10" height="7" viewBox="0 0 10 7"><path d="M0 1 L9 1 L4.5 6 Z" fill="#d0d0d0"/></svg>
<svg class="r" style="left:2244px;top:1302px;" width="12" height="14" viewBox="0 0 12 14"><path d="M3 1 H9 M4 1 V8 H2 V9 H10 V8 H8 V1 M6 9 V13" fill="none" stroke="#e0e0e0" stroke-width="1.2"/></svg>
<svg class="r" style="left:2261px;top:1304px;" width="12" height="12" viewBox="0 0 12 12"><path d="M1.5 1.5 L10.5 10.5 M10.5 1.5 L1.5 10.5" stroke="#e0e0e0" stroke-width="1.2"/></svg>
<div class="r" style="left:4px;top:1318px;width:2274px;height:18px;overflow:hidden;">
<div class="t" style="left:7px;top:9.18px;font-size:11.6px;line-height:16.24px;color:#f0f0f0;">Pokaż dane wyjściowe z:</div>
<div class="r" style="left:141px;top:5px;width:230px;height:20px;background:#3d3d3d;"></div>
<svg class="r" style="left:359px;top:12px" width="8" height="5"><path d="M0 0 L7 0 L3.5 4 Z" fill="#d0d0d0"/></svg>
<div class="r" style="left:377px;top:5px;width:1px;height:20px;background:#3d3d3d"></div>
<div class="r" style="left:407px;top:5px;width:1px;height:20px;background:#3d3d3d"></div>
<div class="r" style="left:459px;top:5px;width:1px;height:20px;background:#3d3d3d"></div>
<div class="r" style="left:489px;top:5px;width:1px;height:20px;background:#3d3d3d"></div>
<div class="r" style="left:519px;top:5px;width:1px;height:20px;background:#3d3d3d"></div>
<svg class="r" style="left:386px;top:6px" width="160" height="16"><path d="M7 4 A2.5 2.5 0 0 0 4.5 6.5 V11 M2.5 9 L4.5 11 L6.5 9 M6 12.5 H14" fill="none" stroke="#5a5a5a" stroke-width="1.1"/><path d="M29 7 H40 M32 4 L29 7 L32 10 M32 12.5 H44" fill="none" stroke="#5a5a5a" stroke-width="1.1"/><path d="M51 7 H62 M59 4 L62 7 L59 10 M51 12.5 H65" fill="none" stroke="#5a5a5a" stroke-width="1.1"/><path d="M82 3 L86 7 M86 3 L82 7 M88 3.5 H96 M88 7 H96 M88 10.5 H96 M82 13 H96" fill="none" stroke="#5a5a5a" stroke-width="1.1"/><text x="112" y="8" font-size="8" fill="#e0e0e0" font-family="Liberation Sans">ab</text><path d="M124 7 H127 V14" fill="none" stroke="#4fa8f0" stroke-width="1.2"/><path d="M117 12 L120 9" stroke="#4fa8f0" stroke-width="1.2"/><circle cx="152" cy="10" r="6.2" fill="none" stroke="#e0e0e0" stroke-width="1.3"/><path d="M152 6.5 V10.5 H155" fill="none" stroke="#e0e0e0" stroke-width="1.2"/></svg>
</div>
<div class="t" style="left:9.2px;top:1337.48px;font-size:11.6px;line-height:17px;color:#c8c8c8;">Konsola menedżera pakietów</div>
<div class="t" style="left:175px;top:1337.48px;font-size:11.6px;line-height:17px;color:#c8c8c8;">Lista błędów</div>
<div class="r" style="left:247px;top:1336px;width:96px;height:21px;background:#1f1f1f;border:1px solid #3d3d3d;box-sizing:border-box;border-top:none;"></div>
<div class="t" style="left:253px;top:1337.48px;font-size:11.6px;line-height:17px;color:#ffffff;">Dane wyjściowe</div>
<div class="r" style="left:0px;top:1363px;width:2556px;height:24px;background:#424242;"></div>
<svg class="r" style="left:1px;top:1367px;" width="17" height="18" viewBox="0 0 17 18"><path d="M1.5 1.5 H15.5 V12.5 H11 L8.5 15.5 L6 12.5 H1.5 Z" fill="none" stroke="#e0e0e0" stroke-width="1.2"/></svg>
<div class="t" style="left:25.4px;top:1366.48px;font-size:11.6px;line-height:17px;color:#ffffff;">Gotowe</div>
<svg class="r" style="left:2169px;top:1367px;" width="12" height="15" viewBox="0 0 12 15"><path d="M6 14 V2 M1.5 6.5 L6 2 L10.5 6.5" fill="none" stroke="#e0e0e0" stroke-width="1.2"/></svg>
<div class="t" style="left:2191px;top:1366.48px;font-size:11.6px;line-height:17px;color:#ffffff;">Dodaj do kontroli źródła</div>
<svg class="r" style="left:2323px;top:1371px;" width="9" height="6" viewBox="0 0 9 6"><path d="M0 5 L4.5 0.5 L9 5 Z" fill="#e0e0e0"/></svg>
<svg class="r" style="left:2354px;top:1367px;" width="15" height="15" viewBox="0 0 15 15"><rect x="1.5" y="1.5" width="12" height="3" fill="none" stroke="#e0e0e0"/><path d="M2.5 4.5 V13.5 H12.5 V4.5 M6 4.5 V9 L7.5 8 L9 9 V4.5" fill="none" stroke="#e0e0e0"/></svg>
<div class="t" style="left:2375px;top:1366.48px;font-size:11.6px;line-height:17px;color:#ffffff;">Wybierz repozytorium</div>
<svg class="r" style="left:2497px;top:1371px;" width="9" height="6" viewBox="0 0 9 6"><path d="M0 5 L4.5 0.5 L9 5 Z" fill="#e0e0e0"/></svg>
<svg class="r" style="left:2525px;top:1365px;" width="22" height="22" viewBox="0 0 22 22"><path d="M3 14 V8.5 A5.5 5.5 0 0 1 14 8.5 V14 L15 15 H2 Z" fill="none" stroke="#e0e0e0" stroke-width="1.1"/><circle cx="15.5" cy="15.5" r="5.2" fill="#f08b9b"/><path d="M14.3 12.8 L16 11.8 V19" fill="none" stroke="#111" stroke-width="1.2"/></svg>
</body></html>
